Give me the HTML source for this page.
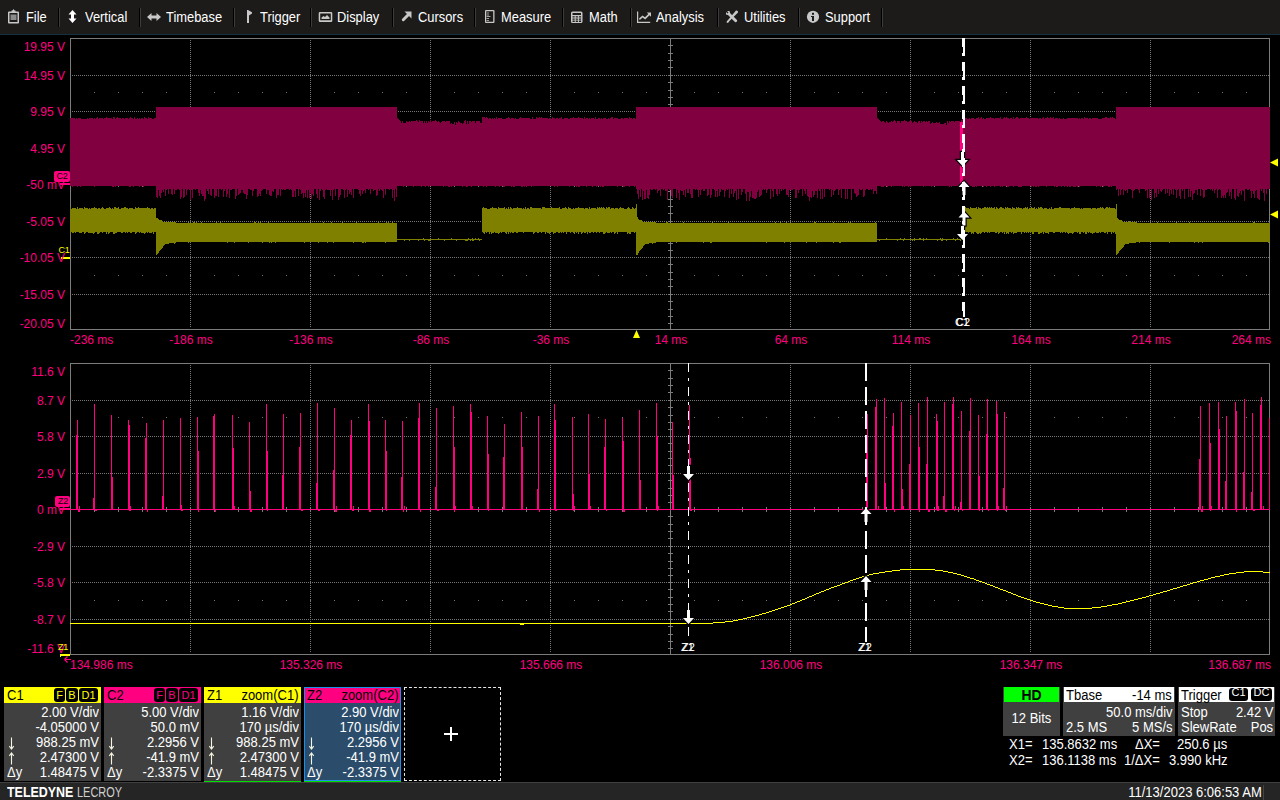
<!DOCTYPE html>
<html><head><meta charset="utf-8"><title>scope</title>
<style>
html,body{margin:0;padding:0;background:#000;}
body{width:1280px;height:800px;overflow:hidden;position:relative;font-family:"Liberation Sans",sans-serif;color:#fff;}
#menu{position:absolute;left:0;top:0;width:1280px;height:34px;background:#1c1b1a;}
#menuline{position:absolute;left:0;top:34px;width:1280px;height:1px;background:#17303f;}
.mi{position:absolute;top:8px;font-size:14px;line-height:18px;color:#fff;white-space:nowrap;transform:scaleX(0.92);transform-origin:0 50%;}
.sep{position:absolute;top:8px;width:1px;height:19px;background:#000;border-right:1px solid #3c3c3c;}
#menu svg{position:absolute;top:0;left:0;}
#scope{position:absolute;left:0;top:0;}
.yl{position:absolute;left:0;width:65px;text-align:right;font-size:12px;line-height:14px;color:#ff0080;white-space:nowrap;}
.xl{position:absolute;font-size:12px;line-height:14px;color:#ff0080;white-space:nowrap;}
.xc{width:120px;text-align:center;}
.mk{position:absolute;font-size:9px;line-height:11px;width:14px;text-align:center;letter-spacing:-0.3px;}
.cl{position:absolute;color:#fff;font-size:11px;line-height:12px;white-space:nowrap;}
/* descriptors */
.dbox{position:absolute;top:687px;width:97px;height:94px;background:#404040;font-size:14px;}
.dbox .hd{position:absolute;left:0;top:0;width:97px;height:16px;}
.dbox .nm{position:absolute;left:3px;top:0;line-height:16px;color:#000;transform:scaleX(.9286);transform-origin:0 50%;}
.dbox .zs{position:absolute;right:3px;top:0;line-height:16px;color:#000;transform:scaleX(.9286);transform-origin:100% 50%;}
.bdg{position:absolute;top:1px;height:14px;background:#000;border-radius:3px;font-size:11px;line-height:14px;text-align:center;}
.row{position:absolute;left:3px;right:2px;height:15px;line-height:15px;text-align:right;white-space:nowrap;transform:scaleX(.9286);transform-origin:100% 50%;}
.sym{position:absolute;left:3px;height:15px;line-height:15px;white-space:nowrap;transform:scaleX(.9286);transform-origin:0 50%;}
.symw{position:absolute;left:3px;height:15px;}
.ar{position:absolute;left:1px;top:2px;}
.ul{position:absolute;left:0;bottom:-1px;width:97px;height:1px;background:#00e000;}
#plus{position:absolute;left:404px;top:687px;width:95px;height:92px;border:1px dashed #e8e8e8;}
#plus:before{content:"";position:absolute;left:39px;top:45px;width:14px;height:2px;background:#fff;}
#plus:after{content:"";position:absolute;left:45px;top:39px;width:2px;height:14px;background:#fff;}
.rbox{position:absolute;top:687px;height:49px;background:#404040;font-size:14px;}
.ol{transform:scaleX(.9286);transform-origin:0 50%;}
.or{transform:scaleX(.9286);transform-origin:100% 50%;}
.oc{transform:scaleX(.9286);transform-origin:50% 50%;}
.rbox .hd{position:absolute;left:1px;right:1px;top:0;height:15px;background:#fff;color:#000;line-height:15px;}
.rbox span{position:absolute;line-height:15px;white-space:nowrap;}
.ct{position:absolute;font-size:14px;line-height:15px;white-space:pre;color:#fff;transform:scaleX(.9286);transform-origin:0 50%;}
#status{position:absolute;left:0;top:782px;width:1280px;height:18px;background:#252525;border-top:1px solid #404040;box-sizing:border-box;}
#logo{position:absolute;left:7px;top:0px;font-size:15px;line-height:17px;white-space:nowrap;transform-origin:0 0;}
#logo b{display:inline-block;transform:scaleX(0.83);transform-origin:0 0;color:#fff;}
#logo span{display:inline-block;transform:scaleX(0.73);transform-origin:0 0;color:#d0d0d0;position:absolute;left:70px;}
#date{position:absolute;right:18px;top:1px;font-size:14px;line-height:16px;color:#fff;transform:scaleX(.9286);transform-origin:100% 50%;}
#dsep{position:absolute;left:1263px;top:2px;width:1px;height:15px;background:#444;}
</style></head>
<body>
<div id="menu">
<div class="mi" style="left:26px">File</div>
<div class="sep" style="left:58px"></div>
<div class="mi" style="left:85px">Vertical</div>
<div class="sep" style="left:139px"></div>
<div class="mi" style="left:166px">Timebase</div>
<div class="sep" style="left:233px"></div>
<div class="mi" style="left:260px">Trigger</div>
<div class="sep" style="left:310px"></div>
<div class="mi" style="left:337px">Display</div>
<div class="sep" style="left:392px"></div>
<div class="mi" style="left:418px">Cursors</div>
<div class="sep" style="left:474px"></div>
<div class="mi" style="left:501px">Measure</div>
<div class="sep" style="left:562px"></div>
<div class="mi" style="left:589px">Math</div>
<div class="sep" style="left:630px"></div>
<div class="mi" style="left:656px">Analysis</div>
<div class="sep" style="left:717px"></div>
<div class="mi" style="left:744px">Utilities</div>
<div class="sep" style="left:798px"></div>
<div class="mi" style="left:825px">Support</div>
<div class="sep" style="left:881px"></div>
<svg width="900" height="34" viewBox="0 0 900 34">
<g fill="#c8c8c8" stroke="none">
<!-- File: clipboard -->
<path d="M9 11.5 h2.5 v-1 h1 l1 -1.5 l1 1.5 h1 v1 h2.5 a1 1 0 0 1 1 1 v10 a1 1 0 0 1 -1 1 h-9 a1 1 0 0 1 -1 -1 v-10 a1 1 0 0 1 1 -1 z M9.5 13 v9 h8 v-9 z" fill-rule="evenodd"/>
<rect x="10.5" y="14.5" width="6" height="5.5" fill="#8a8a8a"/>
<!-- Vertical: up-down arrow -->
<path d="M72.500 10 l4 4.500 h-2.500 v4 h2.500 l-4 4.500 l-4 -4.500 h2.500 v-4 h-2.500 z" fill="#fff"/>
<!-- Timebase: left-right arrow -->
<path d="M147 17 l4.500 -4 v2.500 h5 v-2.500 l4.500 4 l-4.500 4 v-2.500 h-5 v2.500 z"/>
<!-- Trigger: flag -->
<path d="M247 10 h1 l4 2.200 v1.300 l-3 2 v7.500 h-2 z"/>
<!-- Display: picture -->
<path d="M320 12 h11 a1.300 1.300 0 0 1 1.300 1.300 v7.400 a1.300 1.300 0 0 1 -1.300 1.300 h-11 a1.300 1.300 0 0 1 -1.300 -1.300 v-7.400 a1.300 1.300 0 0 1 1.300 -1.300 z M320.200 13.500 v6.800 h10.600 v-6.800 z" fill-rule="evenodd"/>
<path d="M321.500 19 v-1.500 l2 -1.500 l1.500 1 l2 -2 l2.500 2.500 v1.500 z"/>
<!-- Cursors: NE arrow -->
<path d="M404.500 11.500 H411.500 V18.500 Z"/><path d="M403.300 19.700 L408.500 14.500" stroke="#c8c8c8" stroke-width="3" stroke-linecap="round"/>
<!-- Measure: ruler -->
<path d="M486 10 h7.500 a1 1 0 0 1 1 1 v11 a1 1 0 0 1 -1 1 h-7.500 a1 1 0 0 1 -1 -1 v-11 a1 1 0 0 1 1 -1 z M486.200 11.200 v10.600 h7 v-10.600 z" fill-rule="evenodd"/>
<path d="M486.500 12.500 h2.500 v1 h-2.500 z M486.500 14.500 h2.500 v1 h-2.500 z M486.500 16 h4 v1 h-4 z M486.500 18 h2.500 v1 h-2.500 z M486.500 20 h2.500 v1 h-2.500 z" fill="#a0a0a0"/>
<!-- Math: calculator -->
<path d="M572.500 11.500 h8.500 a1.500 1.500 0 0 1 1.500 1.500 v8.500 a1.500 1.500 0 0 1 -1.500 1.500 h-8.500 a1.500 1.500 0 0 1 -1.500 -1.500 v-8.500 a1.500 1.500 0 0 1 1.500 -1.500 z M572.500 13 v2 h8.500 v-2 z M572.500 16.200 v1.300 h2.200 v-1.300 z M575.700 16.200 v1.300 h2.200 v-1.300 z M578.900 16.200 v1.300 h2.200 v-1.300 z M572.500 18.400 v1.300 h2.200 v-1.300 z M575.700 18.400 v1.300 h2.200 v-1.300 z M578.900 18.400 v1.300 h2.200 v-1.300 z M572.500 20.600 v1.300 h2.200 v-1.300 z M575.700 20.600 v1.300 h2.200 v-1.300 z M578.900 20.600 v1.300 h2.200 v-1.300 z" fill-rule="evenodd"/>
<!-- Analysis: chart -->
<path d="M637 11.500 h1.200 v10.300 h12 v1.200 h-13.200 z"/>
<path d="M639 18.500 l3.500 -3 l2.500 1.800 l3.300 -3.300 l-1.500 -1.500 h4.200 v4.200 l-1.500 -1.500 l-4.300 4.300 l-2.600 -1.900 l-2.800 2.400 z"/>
<!-- Utilities: tools -->
<path d="M727 11 l2.500 0 l0.500 2 l7 7 a1.500 1.500 0 0 1 -2 2 l-7 -7 l-2 -0.500 l0 -2.500 l1.500 1.500 l1 -1 z"/>
<path d="M736 10.500 a1.600 1.600 0 0 1 2 2 l-8.500 8.500 l-1.500 2 l-1.500 -0.500 l0.500 -1.500 l1 -1 z"/>
<!-- Support: info -->
<circle cx="813" cy="16.800" r="6.100"/>
<rect x="812" y="12.800" width="2" height="2" fill="#1b1b1b"/>
<rect x="812" y="16" width="2" height="5" fill="#1b1b1b"/>
<rect x="811" y="16" width="2" height="1" fill="#1b1b1b"/>
</g>
</svg>

</div>
<div id="menuline"></div>
<svg id="scope" width="1280" height="800" viewBox="0 0 1280 800">
<g shape-rendering="crispEdges">
<line x1="72" x2="1269" y1="75.5" y2="75.5" stroke="#767676" stroke-width="1" stroke-dasharray="1 1"/>
<line x1="72" x2="1269" y1="111.5" y2="111.5" stroke="#767676" stroke-width="1" stroke-dasharray="1 1"/>
<line x1="72" x2="1269" y1="148.5" y2="148.5" stroke="#767676" stroke-width="1" stroke-dasharray="1 1"/>
<line x1="72" x2="1269" y1="221.5" y2="221.5" stroke="#767676" stroke-width="1" stroke-dasharray="1 1"/>
<line x1="72" x2="1269" y1="257.5" y2="257.5" stroke="#767676" stroke-width="1" stroke-dasharray="1 1"/>
<line x1="72" x2="1269" y1="294.5" y2="294.5" stroke="#767676" stroke-width="1" stroke-dasharray="1 1"/>
<line x1="190.5" x2="190.5" y1="40" y2="328" stroke="#767676" stroke-width="1" stroke-dasharray="1 1"/>
<line x1="310.5" x2="310.5" y1="40" y2="328" stroke="#767676" stroke-width="1" stroke-dasharray="1 1"/>
<line x1="430.5" x2="430.5" y1="40" y2="328" stroke="#767676" stroke-width="1" stroke-dasharray="1 1"/>
<line x1="550.5" x2="550.5" y1="40" y2="328" stroke="#767676" stroke-width="1" stroke-dasharray="1 1"/>
<line x1="790.5" x2="790.5" y1="40" y2="328" stroke="#767676" stroke-width="1" stroke-dasharray="1 1"/>
<line x1="910.5" x2="910.5" y1="40" y2="328" stroke="#767676" stroke-width="1" stroke-dasharray="1 1"/>
<line x1="1030.5" x2="1030.5" y1="40" y2="328" stroke="#767676" stroke-width="1" stroke-dasharray="1 1"/>
<line x1="1150.5" x2="1150.5" y1="40" y2="328" stroke="#767676" stroke-width="1" stroke-dasharray="1 1"/>
<rect x="94" y="92" width="1" height="1" fill="#767676"/>
<rect x="118" y="92" width="1" height="1" fill="#767676"/>
<rect x="142" y="92" width="1" height="1" fill="#767676"/>
<rect x="166" y="92" width="1" height="1" fill="#767676"/>
<rect x="190" y="92" width="1" height="1" fill="#767676"/>
<rect x="214" y="92" width="1" height="1" fill="#767676"/>
<rect x="238" y="92" width="1" height="1" fill="#767676"/>
<rect x="262" y="92" width="1" height="1" fill="#767676"/>
<rect x="286" y="92" width="1" height="1" fill="#767676"/>
<rect x="310" y="92" width="1" height="1" fill="#767676"/>
<rect x="334" y="92" width="1" height="1" fill="#767676"/>
<rect x="358" y="92" width="1" height="1" fill="#767676"/>
<rect x="382" y="92" width="1" height="1" fill="#767676"/>
<rect x="406" y="92" width="1" height="1" fill="#767676"/>
<rect x="430" y="92" width="1" height="1" fill="#767676"/>
<rect x="454" y="92" width="1" height="1" fill="#767676"/>
<rect x="478" y="92" width="1" height="1" fill="#767676"/>
<rect x="502" y="92" width="1" height="1" fill="#767676"/>
<rect x="526" y="92" width="1" height="1" fill="#767676"/>
<rect x="550" y="92" width="1" height="1" fill="#767676"/>
<rect x="574" y="92" width="1" height="1" fill="#767676"/>
<rect x="598" y="92" width="1" height="1" fill="#767676"/>
<rect x="622" y="92" width="1" height="1" fill="#767676"/>
<rect x="646" y="92" width="1" height="1" fill="#767676"/>
<rect x="694" y="92" width="1" height="1" fill="#767676"/>
<rect x="718" y="92" width="1" height="1" fill="#767676"/>
<rect x="742" y="92" width="1" height="1" fill="#767676"/>
<rect x="766" y="92" width="1" height="1" fill="#767676"/>
<rect x="790" y="92" width="1" height="1" fill="#767676"/>
<rect x="814" y="92" width="1" height="1" fill="#767676"/>
<rect x="838" y="92" width="1" height="1" fill="#767676"/>
<rect x="862" y="92" width="1" height="1" fill="#767676"/>
<rect x="886" y="92" width="1" height="1" fill="#767676"/>
<rect x="910" y="92" width="1" height="1" fill="#767676"/>
<rect x="934" y="92" width="1" height="1" fill="#767676"/>
<rect x="958" y="92" width="1" height="1" fill="#767676"/>
<rect x="982" y="92" width="1" height="1" fill="#767676"/>
<rect x="1006" y="92" width="1" height="1" fill="#767676"/>
<rect x="1030" y="92" width="1" height="1" fill="#767676"/>
<rect x="1054" y="92" width="1" height="1" fill="#767676"/>
<rect x="1078" y="92" width="1" height="1" fill="#767676"/>
<rect x="1102" y="92" width="1" height="1" fill="#767676"/>
<rect x="1126" y="92" width="1" height="1" fill="#767676"/>
<rect x="1150" y="92" width="1" height="1" fill="#767676"/>
<rect x="1174" y="92" width="1" height="1" fill="#767676"/>
<rect x="1198" y="92" width="1" height="1" fill="#767676"/>
<rect x="1222" y="92" width="1" height="1" fill="#767676"/>
<rect x="1246" y="92" width="1" height="1" fill="#767676"/>
<rect x="94" y="275" width="1" height="1" fill="#767676"/>
<rect x="118" y="275" width="1" height="1" fill="#767676"/>
<rect x="142" y="275" width="1" height="1" fill="#767676"/>
<rect x="166" y="275" width="1" height="1" fill="#767676"/>
<rect x="190" y="275" width="1" height="1" fill="#767676"/>
<rect x="214" y="275" width="1" height="1" fill="#767676"/>
<rect x="238" y="275" width="1" height="1" fill="#767676"/>
<rect x="262" y="275" width="1" height="1" fill="#767676"/>
<rect x="286" y="275" width="1" height="1" fill="#767676"/>
<rect x="310" y="275" width="1" height="1" fill="#767676"/>
<rect x="334" y="275" width="1" height="1" fill="#767676"/>
<rect x="358" y="275" width="1" height="1" fill="#767676"/>
<rect x="382" y="275" width="1" height="1" fill="#767676"/>
<rect x="406" y="275" width="1" height="1" fill="#767676"/>
<rect x="430" y="275" width="1" height="1" fill="#767676"/>
<rect x="454" y="275" width="1" height="1" fill="#767676"/>
<rect x="478" y="275" width="1" height="1" fill="#767676"/>
<rect x="502" y="275" width="1" height="1" fill="#767676"/>
<rect x="526" y="275" width="1" height="1" fill="#767676"/>
<rect x="550" y="275" width="1" height="1" fill="#767676"/>
<rect x="574" y="275" width="1" height="1" fill="#767676"/>
<rect x="598" y="275" width="1" height="1" fill="#767676"/>
<rect x="622" y="275" width="1" height="1" fill="#767676"/>
<rect x="646" y="275" width="1" height="1" fill="#767676"/>
<rect x="694" y="275" width="1" height="1" fill="#767676"/>
<rect x="718" y="275" width="1" height="1" fill="#767676"/>
<rect x="742" y="275" width="1" height="1" fill="#767676"/>
<rect x="766" y="275" width="1" height="1" fill="#767676"/>
<rect x="790" y="275" width="1" height="1" fill="#767676"/>
<rect x="814" y="275" width="1" height="1" fill="#767676"/>
<rect x="838" y="275" width="1" height="1" fill="#767676"/>
<rect x="862" y="275" width="1" height="1" fill="#767676"/>
<rect x="886" y="275" width="1" height="1" fill="#767676"/>
<rect x="910" y="275" width="1" height="1" fill="#767676"/>
<rect x="934" y="275" width="1" height="1" fill="#767676"/>
<rect x="958" y="275" width="1" height="1" fill="#767676"/>
<rect x="982" y="275" width="1" height="1" fill="#767676"/>
<rect x="1006" y="275" width="1" height="1" fill="#767676"/>
<rect x="1030" y="275" width="1" height="1" fill="#767676"/>
<rect x="1054" y="275" width="1" height="1" fill="#767676"/>
<rect x="1078" y="275" width="1" height="1" fill="#767676"/>
<rect x="1102" y="275" width="1" height="1" fill="#767676"/>
<rect x="1126" y="275" width="1" height="1" fill="#767676"/>
<rect x="1150" y="275" width="1" height="1" fill="#767676"/>
<rect x="1174" y="275" width="1" height="1" fill="#767676"/>
<rect x="1198" y="275" width="1" height="1" fill="#767676"/>
<rect x="1222" y="275" width="1" height="1" fill="#767676"/>
<rect x="1246" y="275" width="1" height="1" fill="#767676"/>
<rect x="670" y="38" width="1" height="291" fill="#7c7c7c"/>
<rect x="70" y="184" width="1200" height="1" fill="#7c7c7c"/>
<rect x="668" y="45" width="5" height="1" fill="#7c7c7c"/>
<rect x="668" y="53" width="5" height="1" fill="#7c7c7c"/>
<rect x="668" y="60" width="5" height="1" fill="#7c7c7c"/>
<rect x="668" y="67" width="5" height="1" fill="#7c7c7c"/>
<rect x="668" y="75" width="5" height="1" fill="#7c7c7c"/>
<rect x="668" y="82" width="5" height="1" fill="#7c7c7c"/>
<rect x="668" y="90" width="5" height="1" fill="#7c7c7c"/>
<rect x="668" y="97" width="5" height="1" fill="#7c7c7c"/>
<rect x="668" y="104" width="5" height="1" fill="#7c7c7c"/>
<rect x="668" y="111" width="5" height="1" fill="#7c7c7c"/>
<rect x="668" y="118" width="5" height="1" fill="#7c7c7c"/>
<rect x="668" y="126" width="5" height="1" fill="#7c7c7c"/>
<rect x="668" y="133" width="5" height="1" fill="#7c7c7c"/>
<rect x="668" y="140" width="5" height="1" fill="#7c7c7c"/>
<rect x="668" y="148" width="5" height="1" fill="#7c7c7c"/>
<rect x="668" y="155" width="5" height="1" fill="#7c7c7c"/>
<rect x="668" y="163" width="5" height="1" fill="#7c7c7c"/>
<rect x="668" y="170" width="5" height="1" fill="#7c7c7c"/>
<rect x="668" y="177" width="5" height="1" fill="#7c7c7c"/>
<rect x="668" y="184" width="5" height="1" fill="#7c7c7c"/>
<rect x="668" y="191" width="5" height="1" fill="#7c7c7c"/>
<rect x="668" y="199" width="5" height="1" fill="#7c7c7c"/>
<rect x="668" y="206" width="5" height="1" fill="#7c7c7c"/>
<rect x="668" y="213" width="5" height="1" fill="#7c7c7c"/>
<rect x="668" y="221" width="5" height="1" fill="#7c7c7c"/>
<rect x="668" y="228" width="5" height="1" fill="#7c7c7c"/>
<rect x="668" y="236" width="5" height="1" fill="#7c7c7c"/>
<rect x="668" y="243" width="5" height="1" fill="#7c7c7c"/>
<rect x="668" y="250" width="5" height="1" fill="#7c7c7c"/>
<rect x="668" y="257" width="5" height="1" fill="#7c7c7c"/>
<rect x="668" y="264" width="5" height="1" fill="#7c7c7c"/>
<rect x="668" y="272" width="5" height="1" fill="#7c7c7c"/>
<rect x="668" y="279" width="5" height="1" fill="#7c7c7c"/>
<rect x="668" y="286" width="5" height="1" fill="#7c7c7c"/>
<rect x="668" y="294" width="5" height="1" fill="#7c7c7c"/>
<rect x="668" y="301" width="5" height="1" fill="#7c7c7c"/>
<rect x="668" y="309" width="5" height="1" fill="#7c7c7c"/>
<rect x="668" y="316" width="5" height="1" fill="#7c7c7c"/>
<rect x="668" y="323" width="5" height="1" fill="#7c7c7c"/>
<rect x="94" y="182" width="1" height="5" fill="#7c7c7c"/>
<rect x="118" y="182" width="1" height="5" fill="#7c7c7c"/>
<rect x="142" y="182" width="1" height="5" fill="#7c7c7c"/>
<rect x="166" y="182" width="1" height="5" fill="#7c7c7c"/>
<rect x="190" y="182" width="1" height="5" fill="#7c7c7c"/>
<rect x="214" y="182" width="1" height="5" fill="#7c7c7c"/>
<rect x="238" y="182" width="1" height="5" fill="#7c7c7c"/>
<rect x="262" y="182" width="1" height="5" fill="#7c7c7c"/>
<rect x="286" y="182" width="1" height="5" fill="#7c7c7c"/>
<rect x="310" y="182" width="1" height="5" fill="#7c7c7c"/>
<rect x="334" y="182" width="1" height="5" fill="#7c7c7c"/>
<rect x="358" y="182" width="1" height="5" fill="#7c7c7c"/>
<rect x="382" y="182" width="1" height="5" fill="#7c7c7c"/>
<rect x="406" y="182" width="1" height="5" fill="#7c7c7c"/>
<rect x="430" y="182" width="1" height="5" fill="#7c7c7c"/>
<rect x="454" y="182" width="1" height="5" fill="#7c7c7c"/>
<rect x="478" y="182" width="1" height="5" fill="#7c7c7c"/>
<rect x="502" y="182" width="1" height="5" fill="#7c7c7c"/>
<rect x="526" y="182" width="1" height="5" fill="#7c7c7c"/>
<rect x="550" y="182" width="1" height="5" fill="#7c7c7c"/>
<rect x="574" y="182" width="1" height="5" fill="#7c7c7c"/>
<rect x="598" y="182" width="1" height="5" fill="#7c7c7c"/>
<rect x="622" y="182" width="1" height="5" fill="#7c7c7c"/>
<rect x="646" y="182" width="1" height="5" fill="#7c7c7c"/>
<rect x="670" y="182" width="1" height="5" fill="#7c7c7c"/>
<rect x="694" y="182" width="1" height="5" fill="#7c7c7c"/>
<rect x="718" y="182" width="1" height="5" fill="#7c7c7c"/>
<rect x="742" y="182" width="1" height="5" fill="#7c7c7c"/>
<rect x="766" y="182" width="1" height="5" fill="#7c7c7c"/>
<rect x="790" y="182" width="1" height="5" fill="#7c7c7c"/>
<rect x="814" y="182" width="1" height="5" fill="#7c7c7c"/>
<rect x="838" y="182" width="1" height="5" fill="#7c7c7c"/>
<rect x="862" y="182" width="1" height="5" fill="#7c7c7c"/>
<rect x="886" y="182" width="1" height="5" fill="#7c7c7c"/>
<rect x="910" y="182" width="1" height="5" fill="#7c7c7c"/>
<rect x="934" y="182" width="1" height="5" fill="#7c7c7c"/>
<rect x="958" y="182" width="1" height="5" fill="#7c7c7c"/>
<rect x="982" y="182" width="1" height="5" fill="#7c7c7c"/>
<rect x="1006" y="182" width="1" height="5" fill="#7c7c7c"/>
<rect x="1030" y="182" width="1" height="5" fill="#7c7c7c"/>
<rect x="1054" y="182" width="1" height="5" fill="#7c7c7c"/>
<rect x="1078" y="182" width="1" height="5" fill="#7c7c7c"/>
<rect x="1102" y="182" width="1" height="5" fill="#7c7c7c"/>
<rect x="1126" y="182" width="1" height="5" fill="#7c7c7c"/>
<rect x="1150" y="182" width="1" height="5" fill="#7c7c7c"/>
<rect x="1174" y="182" width="1" height="5" fill="#7c7c7c"/>
<rect x="1198" y="182" width="1" height="5" fill="#7c7c7c"/>
<rect x="1222" y="182" width="1" height="5" fill="#7c7c7c"/>
<rect x="1246" y="182" width="1" height="5" fill="#7c7c7c"/>
<rect x="70.5" y="38.5" width="1199" height="291" fill="none" stroke="#7c7c7c" stroke-width="1"/>
</g>
<g shape-rendering="crispEdges">
<line x1="72" x2="1269" y1="400.5" y2="400.5" stroke="#767676" stroke-width="1" stroke-dasharray="1 1"/>
<line x1="72" x2="1269" y1="436.5" y2="436.5" stroke="#767676" stroke-width="1" stroke-dasharray="1 1"/>
<line x1="72" x2="1269" y1="473.5" y2="473.5" stroke="#767676" stroke-width="1" stroke-dasharray="1 1"/>
<line x1="72" x2="1269" y1="546.5" y2="546.5" stroke="#767676" stroke-width="1" stroke-dasharray="1 1"/>
<line x1="72" x2="1269" y1="582.5" y2="582.5" stroke="#767676" stroke-width="1" stroke-dasharray="1 1"/>
<line x1="72" x2="1269" y1="619.5" y2="619.5" stroke="#767676" stroke-width="1" stroke-dasharray="1 1"/>
<line x1="190.5" x2="190.5" y1="365" y2="653" stroke="#767676" stroke-width="1" stroke-dasharray="1 1"/>
<line x1="310.5" x2="310.5" y1="365" y2="653" stroke="#767676" stroke-width="1" stroke-dasharray="1 1"/>
<line x1="430.5" x2="430.5" y1="365" y2="653" stroke="#767676" stroke-width="1" stroke-dasharray="1 1"/>
<line x1="550.5" x2="550.5" y1="365" y2="653" stroke="#767676" stroke-width="1" stroke-dasharray="1 1"/>
<line x1="790.5" x2="790.5" y1="365" y2="653" stroke="#767676" stroke-width="1" stroke-dasharray="1 1"/>
<line x1="910.5" x2="910.5" y1="365" y2="653" stroke="#767676" stroke-width="1" stroke-dasharray="1 1"/>
<line x1="1030.5" x2="1030.5" y1="365" y2="653" stroke="#767676" stroke-width="1" stroke-dasharray="1 1"/>
<line x1="1150.5" x2="1150.5" y1="365" y2="653" stroke="#767676" stroke-width="1" stroke-dasharray="1 1"/>
<rect x="94" y="417" width="1" height="1" fill="#767676"/>
<rect x="118" y="417" width="1" height="1" fill="#767676"/>
<rect x="142" y="417" width="1" height="1" fill="#767676"/>
<rect x="166" y="417" width="1" height="1" fill="#767676"/>
<rect x="190" y="417" width="1" height="1" fill="#767676"/>
<rect x="214" y="417" width="1" height="1" fill="#767676"/>
<rect x="238" y="417" width="1" height="1" fill="#767676"/>
<rect x="262" y="417" width="1" height="1" fill="#767676"/>
<rect x="286" y="417" width="1" height="1" fill="#767676"/>
<rect x="310" y="417" width="1" height="1" fill="#767676"/>
<rect x="334" y="417" width="1" height="1" fill="#767676"/>
<rect x="358" y="417" width="1" height="1" fill="#767676"/>
<rect x="382" y="417" width="1" height="1" fill="#767676"/>
<rect x="406" y="417" width="1" height="1" fill="#767676"/>
<rect x="430" y="417" width="1" height="1" fill="#767676"/>
<rect x="454" y="417" width="1" height="1" fill="#767676"/>
<rect x="478" y="417" width="1" height="1" fill="#767676"/>
<rect x="502" y="417" width="1" height="1" fill="#767676"/>
<rect x="526" y="417" width="1" height="1" fill="#767676"/>
<rect x="550" y="417" width="1" height="1" fill="#767676"/>
<rect x="574" y="417" width="1" height="1" fill="#767676"/>
<rect x="598" y="417" width="1" height="1" fill="#767676"/>
<rect x="622" y="417" width="1" height="1" fill="#767676"/>
<rect x="646" y="417" width="1" height="1" fill="#767676"/>
<rect x="694" y="417" width="1" height="1" fill="#767676"/>
<rect x="718" y="417" width="1" height="1" fill="#767676"/>
<rect x="742" y="417" width="1" height="1" fill="#767676"/>
<rect x="766" y="417" width="1" height="1" fill="#767676"/>
<rect x="790" y="417" width="1" height="1" fill="#767676"/>
<rect x="814" y="417" width="1" height="1" fill="#767676"/>
<rect x="838" y="417" width="1" height="1" fill="#767676"/>
<rect x="862" y="417" width="1" height="1" fill="#767676"/>
<rect x="886" y="417" width="1" height="1" fill="#767676"/>
<rect x="910" y="417" width="1" height="1" fill="#767676"/>
<rect x="934" y="417" width="1" height="1" fill="#767676"/>
<rect x="958" y="417" width="1" height="1" fill="#767676"/>
<rect x="982" y="417" width="1" height="1" fill="#767676"/>
<rect x="1006" y="417" width="1" height="1" fill="#767676"/>
<rect x="1030" y="417" width="1" height="1" fill="#767676"/>
<rect x="1054" y="417" width="1" height="1" fill="#767676"/>
<rect x="1078" y="417" width="1" height="1" fill="#767676"/>
<rect x="1102" y="417" width="1" height="1" fill="#767676"/>
<rect x="1126" y="417" width="1" height="1" fill="#767676"/>
<rect x="1150" y="417" width="1" height="1" fill="#767676"/>
<rect x="1174" y="417" width="1" height="1" fill="#767676"/>
<rect x="1198" y="417" width="1" height="1" fill="#767676"/>
<rect x="1222" y="417" width="1" height="1" fill="#767676"/>
<rect x="1246" y="417" width="1" height="1" fill="#767676"/>
<rect x="94" y="600" width="1" height="1" fill="#767676"/>
<rect x="118" y="600" width="1" height="1" fill="#767676"/>
<rect x="142" y="600" width="1" height="1" fill="#767676"/>
<rect x="166" y="600" width="1" height="1" fill="#767676"/>
<rect x="190" y="600" width="1" height="1" fill="#767676"/>
<rect x="214" y="600" width="1" height="1" fill="#767676"/>
<rect x="238" y="600" width="1" height="1" fill="#767676"/>
<rect x="262" y="600" width="1" height="1" fill="#767676"/>
<rect x="286" y="600" width="1" height="1" fill="#767676"/>
<rect x="310" y="600" width="1" height="1" fill="#767676"/>
<rect x="334" y="600" width="1" height="1" fill="#767676"/>
<rect x="358" y="600" width="1" height="1" fill="#767676"/>
<rect x="382" y="600" width="1" height="1" fill="#767676"/>
<rect x="406" y="600" width="1" height="1" fill="#767676"/>
<rect x="430" y="600" width="1" height="1" fill="#767676"/>
<rect x="454" y="600" width="1" height="1" fill="#767676"/>
<rect x="478" y="600" width="1" height="1" fill="#767676"/>
<rect x="502" y="600" width="1" height="1" fill="#767676"/>
<rect x="526" y="600" width="1" height="1" fill="#767676"/>
<rect x="550" y="600" width="1" height="1" fill="#767676"/>
<rect x="574" y="600" width="1" height="1" fill="#767676"/>
<rect x="598" y="600" width="1" height="1" fill="#767676"/>
<rect x="622" y="600" width="1" height="1" fill="#767676"/>
<rect x="646" y="600" width="1" height="1" fill="#767676"/>
<rect x="694" y="600" width="1" height="1" fill="#767676"/>
<rect x="718" y="600" width="1" height="1" fill="#767676"/>
<rect x="742" y="600" width="1" height="1" fill="#767676"/>
<rect x="766" y="600" width="1" height="1" fill="#767676"/>
<rect x="790" y="600" width="1" height="1" fill="#767676"/>
<rect x="814" y="600" width="1" height="1" fill="#767676"/>
<rect x="838" y="600" width="1" height="1" fill="#767676"/>
<rect x="862" y="600" width="1" height="1" fill="#767676"/>
<rect x="886" y="600" width="1" height="1" fill="#767676"/>
<rect x="910" y="600" width="1" height="1" fill="#767676"/>
<rect x="934" y="600" width="1" height="1" fill="#767676"/>
<rect x="958" y="600" width="1" height="1" fill="#767676"/>
<rect x="982" y="600" width="1" height="1" fill="#767676"/>
<rect x="1006" y="600" width="1" height="1" fill="#767676"/>
<rect x="1030" y="600" width="1" height="1" fill="#767676"/>
<rect x="1054" y="600" width="1" height="1" fill="#767676"/>
<rect x="1078" y="600" width="1" height="1" fill="#767676"/>
<rect x="1102" y="600" width="1" height="1" fill="#767676"/>
<rect x="1126" y="600" width="1" height="1" fill="#767676"/>
<rect x="1150" y="600" width="1" height="1" fill="#767676"/>
<rect x="1174" y="600" width="1" height="1" fill="#767676"/>
<rect x="1198" y="600" width="1" height="1" fill="#767676"/>
<rect x="1222" y="600" width="1" height="1" fill="#767676"/>
<rect x="1246" y="600" width="1" height="1" fill="#767676"/>
<rect x="670" y="363" width="1" height="291" fill="#7c7c7c"/>
<rect x="70" y="509" width="1200" height="1" fill="#7c7c7c"/>
<rect x="668" y="370" width="5" height="1" fill="#7c7c7c"/>
<rect x="668" y="378" width="5" height="1" fill="#7c7c7c"/>
<rect x="668" y="385" width="5" height="1" fill="#7c7c7c"/>
<rect x="668" y="392" width="5" height="1" fill="#7c7c7c"/>
<rect x="668" y="400" width="5" height="1" fill="#7c7c7c"/>
<rect x="668" y="407" width="5" height="1" fill="#7c7c7c"/>
<rect x="668" y="415" width="5" height="1" fill="#7c7c7c"/>
<rect x="668" y="422" width="5" height="1" fill="#7c7c7c"/>
<rect x="668" y="429" width="5" height="1" fill="#7c7c7c"/>
<rect x="668" y="436" width="5" height="1" fill="#7c7c7c"/>
<rect x="668" y="443" width="5" height="1" fill="#7c7c7c"/>
<rect x="668" y="451" width="5" height="1" fill="#7c7c7c"/>
<rect x="668" y="458" width="5" height="1" fill="#7c7c7c"/>
<rect x="668" y="465" width="5" height="1" fill="#7c7c7c"/>
<rect x="668" y="473" width="5" height="1" fill="#7c7c7c"/>
<rect x="668" y="480" width="5" height="1" fill="#7c7c7c"/>
<rect x="668" y="488" width="5" height="1" fill="#7c7c7c"/>
<rect x="668" y="495" width="5" height="1" fill="#7c7c7c"/>
<rect x="668" y="502" width="5" height="1" fill="#7c7c7c"/>
<rect x="668" y="509" width="5" height="1" fill="#7c7c7c"/>
<rect x="668" y="516" width="5" height="1" fill="#7c7c7c"/>
<rect x="668" y="524" width="5" height="1" fill="#7c7c7c"/>
<rect x="668" y="531" width="5" height="1" fill="#7c7c7c"/>
<rect x="668" y="538" width="5" height="1" fill="#7c7c7c"/>
<rect x="668" y="546" width="5" height="1" fill="#7c7c7c"/>
<rect x="668" y="553" width="5" height="1" fill="#7c7c7c"/>
<rect x="668" y="561" width="5" height="1" fill="#7c7c7c"/>
<rect x="668" y="568" width="5" height="1" fill="#7c7c7c"/>
<rect x="668" y="575" width="5" height="1" fill="#7c7c7c"/>
<rect x="668" y="582" width="5" height="1" fill="#7c7c7c"/>
<rect x="668" y="589" width="5" height="1" fill="#7c7c7c"/>
<rect x="668" y="597" width="5" height="1" fill="#7c7c7c"/>
<rect x="668" y="604" width="5" height="1" fill="#7c7c7c"/>
<rect x="668" y="611" width="5" height="1" fill="#7c7c7c"/>
<rect x="668" y="619" width="5" height="1" fill="#7c7c7c"/>
<rect x="668" y="626" width="5" height="1" fill="#7c7c7c"/>
<rect x="668" y="634" width="5" height="1" fill="#7c7c7c"/>
<rect x="668" y="641" width="5" height="1" fill="#7c7c7c"/>
<rect x="668" y="648" width="5" height="1" fill="#7c7c7c"/>
<rect x="94" y="507" width="1" height="5" fill="#7c7c7c"/>
<rect x="118" y="507" width="1" height="5" fill="#7c7c7c"/>
<rect x="142" y="507" width="1" height="5" fill="#7c7c7c"/>
<rect x="166" y="507" width="1" height="5" fill="#7c7c7c"/>
<rect x="190" y="507" width="1" height="5" fill="#7c7c7c"/>
<rect x="214" y="507" width="1" height="5" fill="#7c7c7c"/>
<rect x="238" y="507" width="1" height="5" fill="#7c7c7c"/>
<rect x="262" y="507" width="1" height="5" fill="#7c7c7c"/>
<rect x="286" y="507" width="1" height="5" fill="#7c7c7c"/>
<rect x="310" y="507" width="1" height="5" fill="#7c7c7c"/>
<rect x="334" y="507" width="1" height="5" fill="#7c7c7c"/>
<rect x="358" y="507" width="1" height="5" fill="#7c7c7c"/>
<rect x="382" y="507" width="1" height="5" fill="#7c7c7c"/>
<rect x="406" y="507" width="1" height="5" fill="#7c7c7c"/>
<rect x="430" y="507" width="1" height="5" fill="#7c7c7c"/>
<rect x="454" y="507" width="1" height="5" fill="#7c7c7c"/>
<rect x="478" y="507" width="1" height="5" fill="#7c7c7c"/>
<rect x="502" y="507" width="1" height="5" fill="#7c7c7c"/>
<rect x="526" y="507" width="1" height="5" fill="#7c7c7c"/>
<rect x="550" y="507" width="1" height="5" fill="#7c7c7c"/>
<rect x="574" y="507" width="1" height="5" fill="#7c7c7c"/>
<rect x="598" y="507" width="1" height="5" fill="#7c7c7c"/>
<rect x="622" y="507" width="1" height="5" fill="#7c7c7c"/>
<rect x="646" y="507" width="1" height="5" fill="#7c7c7c"/>
<rect x="670" y="507" width="1" height="5" fill="#7c7c7c"/>
<rect x="694" y="507" width="1" height="5" fill="#7c7c7c"/>
<rect x="718" y="507" width="1" height="5" fill="#7c7c7c"/>
<rect x="742" y="507" width="1" height="5" fill="#7c7c7c"/>
<rect x="766" y="507" width="1" height="5" fill="#7c7c7c"/>
<rect x="790" y="507" width="1" height="5" fill="#7c7c7c"/>
<rect x="814" y="507" width="1" height="5" fill="#7c7c7c"/>
<rect x="838" y="507" width="1" height="5" fill="#7c7c7c"/>
<rect x="862" y="507" width="1" height="5" fill="#7c7c7c"/>
<rect x="886" y="507" width="1" height="5" fill="#7c7c7c"/>
<rect x="910" y="507" width="1" height="5" fill="#7c7c7c"/>
<rect x="934" y="507" width="1" height="5" fill="#7c7c7c"/>
<rect x="958" y="507" width="1" height="5" fill="#7c7c7c"/>
<rect x="982" y="507" width="1" height="5" fill="#7c7c7c"/>
<rect x="1006" y="507" width="1" height="5" fill="#7c7c7c"/>
<rect x="1030" y="507" width="1" height="5" fill="#7c7c7c"/>
<rect x="1054" y="507" width="1" height="5" fill="#7c7c7c"/>
<rect x="1078" y="507" width="1" height="5" fill="#7c7c7c"/>
<rect x="1102" y="507" width="1" height="5" fill="#7c7c7c"/>
<rect x="1126" y="507" width="1" height="5" fill="#7c7c7c"/>
<rect x="1150" y="507" width="1" height="5" fill="#7c7c7c"/>
<rect x="1174" y="507" width="1" height="5" fill="#7c7c7c"/>
<rect x="1198" y="507" width="1" height="5" fill="#7c7c7c"/>
<rect x="1222" y="507" width="1" height="5" fill="#7c7c7c"/>
<rect x="1246" y="507" width="1" height="5" fill="#7c7c7c"/>
<rect x="70.5" y="363.5" width="1199" height="291" fill="none" stroke="#7c7c7c" stroke-width="1"/>
</g>
<g shape-rendering="crispEdges"><path d="M70 118H71V118H72V118H73V118H74V118H75V119H76V118H77V119H78V118H79V118H80V118H81V119H82V119H83V119H84V119H85V119H86V119H87V118H88V119H89V118H90V118H91V118H92V118H93V119H94V118H95V119H96V118H97V117H98V119H99V118H100V118H101V118H102V118H103V119H104V118H105V118H106V117H107V118H108V118H109V118H110V118H111V118H112V119H113V117H114V117H115V119H116V118H117V117H118V118H119V118H120V118H121V119H122V118H123V118H124V119H125V118H126V118H127V118H128V119H129V118H130V117H131V118H132V118H133V119H134V117H135V119H136V119H137V118H138V119H139V118H140V119H141V118H142V118H143V119H144V117H145V118H146V118H147V119H148V117H149V118H150V118H151V118H152V119H153V119H154V118H155V118H156V107H157V107H158V107H159V107H160V107H161V107H162V107H163V107H164V107H165V107H166V107H167V107H168V107H169V107H170V107H171V107H172V107H173V107H174V107H175V107H176V107H177V107H178V107H179V107H180V107H181V107H182V107H183V107H184V107H185V107H186V107H187V107H188V107H189V107H190V107H191V107H192V107H193V107H194V107H195V107H196V107H197V107H198V107H199V107H200V107H201V107H202V107H203V107H204V107H205V107H206V107H207V107H208V107H209V107H210V107H211V107H212V107H213V107H214V107H215V107H216V107H217V107H218V107H219V107H220V107H221V107H222V107H223V107H224V107H225V107H226V107H227V107H228V107H229V107H230V107H231V107H232V107H233V107H234V107H235V107H236V107H237V107H238V107H239V107H240V107H241V107H242V107H243V107H244V107H245V107H246V107H247V107H248V107H249V107H250V107H251V107H252V107H253V107H254V107H255V107H256V107H257V107H258V107H259V107H260V107H261V107H262V107H263V107H264V107H265V107H266V107H267V107H268V107H269V107H270V107H271V107H272V107H273V107H274V107H275V107H276V107H277V107H278V107H279V107H280V107H281V107H282V107H283V107H284V107H285V107H286V107H287V107H288V107H289V107H290V107H291V107H292V107H293V107H294V107H295V107H296V107H297V107H298V107H299V107H300V107H301V107H302V107H303V107H304V107H305V107H306V107H307V107H308V107H309V107H310V107H311V107H312V107H313V107H314V107H315V107H316V107H317V107H318V107H319V107H320V107H321V107H322V107H323V107H324V107H325V107H326V107H327V107H328V107H329V107H330V107H331V107H332V107H333V107H334V107H335V107H336V107H337V107H338V107H339V107H340V107H341V107H342V107H343V107H344V107H345V107H346V107H347V107H348V107H349V107H350V107H351V107H352V107H353V107H354V107H355V107H356V107H357V107H358V107H359V107H360V107H361V107H362V107H363V107H364V107H365V107H366V107H367V107H368V107H369V107H370V107H371V107H372V107H373V107H374V107H375V107H376V107H377V107H378V107H379V107H380V107H381V107H382V107H383V107H384V107H385V107H386V107H387V107H388V107H389V107H390V107H391V107H392V107H393V107H394V107H395V107H396V107H397V118H398V119H399V120H400V121H401V123H402V121H403V123H404V123H405V123H406V121H407V122H408V122H409V121H410V122H411V121H412V121H413V121H414V121H415V121H416V120H417V121H418V122H419V120H420V121H421V121H422V121H423V123H424V121H425V123H426V121H427V123H428V121H429V122H430V120H431V122H432V121H433V121H434V121H435V120H436V121H437V122H438V121H439V122H440V123H441V122H442V121H443V121H444V121H445V122H446V121H447V121H448V121H449V121H450V124H451V123H452V124H453V124H454V122H455V125H456V122H457V123H458V121H459V122H460V123H461V123H462V124H463V123H464V121H465V120H466V124H467V121H468V124H469V121H470V121H471V122H472V121H473V121H474V121H475V123H476V121H477V121H478V121H479V121H480V123H481V123H482V117H483V117H484V117H485V118H486V117H487V118H488V119H489V118H490V118H491V119H492V118H493V119H494V118H495V119H496V117H497V119H498V118H499V118H500V118H501V118H502V119H503V119H504V119H505V119H506V118H507V118H508V117H509V118H510V119H511V118H512V118H513V118H514V119H515V118H516V119H517V119H518V119H519V118H520V117H521V118H522V118H523V118H524V118H525V118H526V118H527V118H528V118H529V118H530V119H531V119H532V117H533V119H534V119H535V119H536V117H537V118H538V118H539V117H540V118H541V117H542V118H543V118H544V118H545V118H546V118H547V118H548V119H549V118H550V118H551V119H552V117H553V118H554V118H555V119H556V118H557V118H558V119H559V118H560V118H561V117H562V119H563V119H564V118H565V118H566V118H567V118H568V119H569V119H570V118H571V118H572V118H573V117H574V118H575V118H576V118H577V118H578V117H579V118H580V118H581V118H582V118H583V119H584V117H585V119H586V118H587V118H588V119H589V118H590V119H591V118H592V118H593V118H594V119H595V117H596V119H597V119H598V118H599V118H600V119H601V118H602V119H603V118H604V118H605V118H606V119H607V119H608V118H609V119H610V118H611V117H612V117H613V119H614V118H615V118H616V118H617V118H618V119H619V119H620V119H621V118H622V118H623V119H624V118H625V118H626V118H627V118H628V119H629V117H630V118H631V118H632V119H633V118H634V118H635V119H636V107H637V107H638V107H639V107H640V107H641V107H642V107H643V107H644V107H645V107H646V107H647V107H648V107H649V107H650V107H651V107H652V107H653V107H654V107H655V107H656V107H657V107H658V107H659V107H660V107H661V107H662V107H663V107H664V107H665V107H666V107H667V107H668V107H669V107H670V107H671V107H672V107H673V107H674V107H675V107H676V107H677V107H678V107H679V107H680V107H681V107H682V107H683V107H684V107H685V107H686V107H687V107H688V107H689V107H690V107H691V107H692V107H693V107H694V107H695V107H696V107H697V107H698V107H699V107H700V107H701V107H702V107H703V107H704V107H705V107H706V107H707V107H708V107H709V107H710V107H711V107H712V107H713V107H714V107H715V107H716V107H717V107H718V107H719V107H720V107H721V107H722V107H723V107H724V107H725V107H726V107H727V107H728V107H729V107H730V107H731V107H732V107H733V107H734V107H735V107H736V107H737V107H738V107H739V107H740V107H741V107H742V107H743V107H744V107H745V107H746V107H747V107H748V107H749V107H750V107H751V107H752V107H753V107H754V107H755V107H756V107H757V107H758V107H759V107H760V107H761V107H762V107H763V107H764V107H765V107H766V107H767V107H768V107H769V107H770V107H771V107H772V107H773V107H774V107H775V107H776V107H777V107H778V107H779V107H780V107H781V107H782V107H783V107H784V107H785V107H786V107H787V107H788V107H789V107H790V107H791V107H792V107H793V107H794V107H795V107H796V107H797V107H798V107H799V107H800V107H801V107H802V107H803V107H804V107H805V107H806V107H807V107H808V107H809V107H810V107H811V107H812V107H813V107H814V107H815V107H816V107H817V107H818V107H819V107H820V107H821V107H822V107H823V107H824V107H825V107H826V107H827V107H828V107H829V107H830V107H831V107H832V107H833V107H834V107H835V107H836V107H837V107H838V107H839V107H840V107H841V107H842V107H843V107H844V107H845V107H846V107H847V107H848V107H849V107H850V107H851V107H852V107H853V107H854V107H855V107H856V107H857V107H858V107H859V107H860V107H861V107H862V107H863V107H864V107H865V107H866V107H867V107H868V107H869V107H870V107H871V107H872V107H873V107H874V107H875V107H876V107H877V118H878V119H879V120H880V121H881V122H882V121H883V121H884V122H885V123H886V121H887V122H888V123H889V122H890V122H891V121H892V122H893V121H894V120H895V121H896V123H897V121H898V121H899V121H900V123H901V121H902V121H903V121H904V120H905V121H906V121H907V122H908V122H909V121H910V120H911V121H912V123H913V122H914V121H915V122H916V122H917V123H918V121H919V121H920V123H921V121H922V122H923V121H924V121H925V122H926V121H927V122H928V121H929V121H930V124H931V123H932V122H933V123H934V123H935V123H936V122H937V123H938V123H939V122H940V124H941V124H942V124H943V124H944V123H945V123H946V125H947V121H948V123H949V121H950V122H951V121H952V121H953V121H954V122H955V121H956V121H957V121H958V121H959V121H960V123H961V120H962V118H963V119H964V118H965V118H966V118H967V119H968V119H969V118H970V119H971V118H972V118H973V118H974V119H975V119H976V118H977V118H978V117H979V119H980V118H981V117H982V119H983V118H984V119H985V119H986V118H987V118H988V118H989V118H990V117H991V118H992V118H993V118H994V119H995V118H996V118H997V118H998V118H999V118H1000V117H1001V119H1002V119H1003V118H1004V117H1005V118H1006V117H1007V118H1008V118H1009V119H1010V118H1011V118H1012V119H1013V117H1014V119H1015V118H1016V117H1017V117H1018V118H1019V119H1020V118H1021V118H1022V118H1023V118H1024V118H1025V118H1026V117H1027V118H1028V118H1029V119H1030V118H1031V118H1032V118H1033V118H1034V118H1035V118H1036V118H1037V118H1038V119H1039V118H1040V118H1041V119H1042V118H1043V117H1044V119H1045V118H1046V118H1047V117H1048V118H1049V118H1050V117H1051V118H1052V118H1053V117H1054V119H1055V118H1056V118H1057V118H1058V119H1059V118H1060V119H1061V119H1062V119H1063V118H1064V119H1065V119H1066V119H1067V118H1068V118H1069V118H1070V118H1071V118H1072V118H1073V118H1074V118H1075V118H1076V118H1077V118H1078V119H1079V118H1080V119H1081V118H1082V118H1083V119H1084V117H1085V118H1086V118H1087V118H1088V119H1089V118H1090V118H1091V119H1092V118H1093V118H1094V118H1095V118H1096V118H1097V118H1098V119H1099V119H1100V119H1101V119H1102V118H1103V118H1104V118H1105V117H1106V117H1107V118H1108V118H1109V118H1110V117H1111V118H1112V117H1113V118H1114V118H1115V119H1116V107H1117V107H1118V107H1119V107H1120V107H1121V107H1122V107H1123V107H1124V107H1125V107H1126V107H1127V107H1128V107H1129V107H1130V107H1131V107H1132V107H1133V107H1134V107H1135V107H1136V107H1137V107H1138V107H1139V107H1140V107H1141V107H1142V107H1143V107H1144V107H1145V107H1146V107H1147V107H1148V107H1149V107H1150V107H1151V107H1152V107H1153V107H1154V107H1155V107H1156V107H1157V107H1158V107H1159V107H1160V107H1161V107H1162V107H1163V107H1164V107H1165V107H1166V107H1167V107H1168V107H1169V107H1170V107H1171V107H1172V107H1173V107H1174V107H1175V107H1176V107H1177V107H1178V107H1179V107H1180V107H1181V107H1182V107H1183V107H1184V107H1185V107H1186V107H1187V107H1188V107H1189V107H1190V107H1191V107H1192V107H1193V107H1194V107H1195V107H1196V107H1197V107H1198V107H1199V107H1200V107H1201V107H1202V107H1203V107H1204V107H1205V107H1206V107H1207V107H1208V107H1209V107H1210V107H1211V107H1212V107H1213V107H1214V107H1215V107H1216V107H1217V107H1218V107H1219V107H1220V107H1221V107H1222V107H1223V107H1224V107H1225V107H1226V107H1227V107H1228V107H1229V107H1230V107H1231V107H1232V107H1233V107H1234V107H1235V107H1236V107H1237V107H1238V107H1239V107H1240V107H1241V107H1242V107H1243V107H1244V107H1245V107H1246V107H1247V107H1248V107H1249V107H1250V107H1251V107H1252V107H1253V107H1254V107H1255V107H1256V107H1257V107H1258V107H1259V107H1260V107H1261V107H1262V107H1263V107H1264V107H1265V107H1266V107H1267V107H1268V107H1269V107H1270V189H1269V189H1268V189H1267V194H1266V189H1265V201H1264V193H1263V189H1262V191H1261V189H1260V200H1259V199H1258V198H1257V190H1256V191H1255V198H1254V194H1253V191H1252V198H1251V191H1250V189H1249V190H1248V190H1247V189H1246V189H1245V201H1244V191H1243V190H1242V195H1241V191H1240V193H1239V197H1238V196H1237V189H1236V200H1235V198H1234V189H1233V189H1232V199H1231V192H1230V196H1229V189H1228V192H1227V193H1226V198H1225V195H1224V198H1223V196H1222V198H1221V190H1220V189H1219V190H1218V198H1217V189H1216V190H1215V193H1214V189H1213V191H1212V189H1211V190H1210V189H1209V189H1208V189H1207V190H1206V190H1205V197H1204V198H1203V190H1202V189H1201V196H1200V189H1199V189H1198V195H1197V190H1196V190H1195V193H1194V194H1193V200H1192V191H1191V197H1190V189H1189V197H1188V189H1187V189H1186V189H1185V199H1184V189H1183V191H1182V189H1181V199H1180V196H1179V189H1178V190H1177V198H1176V190H1175V189H1174V195H1173V189H1172V194H1171V190H1170V196H1169V189H1168V193H1167V189H1166V194H1165V189H1164V189H1163V190H1162V192H1161V191H1160V189H1159V194H1158V189H1157V197H1156V193H1155V198H1154V189H1153V189H1152V200H1151V189H1150V198H1149V189H1148V198H1147V190H1146V191H1145V189H1144V189H1143V189H1142V189H1141V189H1140V193H1139V190H1138V189H1137V189H1136V189H1135V190H1134V191H1133V198H1132V190H1131V189H1130V189H1129V189H1128V193H1127V190H1126V191H1125V190H1124V195H1123V189H1122V190H1121V195H1120V189H1119V196H1118V189H1117V190H1116V186H1115V186H1114V186H1113V186H1112V187H1111V186H1110V187H1109V187H1108V186H1107V186H1106V186H1105V186H1104V187H1103V186H1102V186H1101V187H1100V186H1099V186H1098V186H1097V187H1096V186H1095V186H1094V186H1093V186H1092V186H1091V186H1090V186H1089V186H1088V186H1087V186H1086V186H1085V186H1084V186H1083V186H1082V186H1081V186H1080V187H1079V186H1078V187H1077V186H1076V187H1075V187H1074V187H1073V186H1072V186H1071V187H1070V187H1069V186H1068V187H1067V186H1066V186H1065V187H1064V186H1063V186H1062V187H1061V186H1060V186H1059V186H1058V187H1057V187H1056V186H1055V187H1054V186H1053V186H1052V186H1051V186H1050V186H1049V186H1048V186H1047V187H1046V186H1045V186H1044V186H1043V186H1042V186H1041V186H1040V186H1039V187H1038V186H1037V187H1036V187H1035V186H1034V187H1033V186H1032V187H1031V186H1030V186H1029V186H1028V186H1027V186H1026V186H1025V186H1024V186H1023V186H1022V187H1021V187H1020V187H1019V187H1018V186H1017V186H1016V186H1015V186H1014V187H1013V186H1012V186H1011V186H1010V186H1009V187H1008V187H1007V186H1006V186H1005V186H1004V186H1003V187H1002V186H1001V187H1000V186H999V186H998V186H997V186H996V186H995V187H994V186H993V186H992V186H991V187H990V186H989V186H988V186H987V187H986V186H985V186H984V187H983V186H982V186H981V186H980V186H979V186H978V186H977V187H976V186H975V187H974V187H973V187H972V186H971V186H970V186H969V186H968V187H967V187H966V186H965V186H964V186H963V187H962V186H961V187H960V186H959V186H958V186H957V186H956V186H955V186H954V186H953V186H952V187H951V186H950V187H949V186H948V186H947V186H946V186H945V186H944V186H943V186H942V186H941V186H940V186H939V186H938V186H937V186H936V186H935V186H934V186H933V186H932V187H931V186H930V186H929V186H928V186H927V186H926V186H925V186H924V187H923V186H922V186H921V186H920V186H919V186H918V186H917V186H916V186H915V186H914V186H913V186H912V186H911V187H910V186H909V187H908V186H907V186H906V186H905V187H904V186H903V187H902V186H901V186H900V186H899V186H898V186H897V186H896V186H895V186H894V186H893V186H892V187H891V186H890V186H889V186H888V187H887V186H886V186H885V186H884V187H883V187H882V187H881V186H880V186H879V186H878V186H877V194H876V191H875V191H874V194H873V189H872V190H871V189H870V190H869V190H868V189H867V189H866V190H865V196H864V197H863V189H862V190H861V190H860V189H859V195H858V196H857V197H856V194H855V193H854V189H853V189H852V200H851V189H850V189H849V189H848V199H847V189H846V199H845V189H844V189H843V189H842V198H841V189H840V190H839V195H838V189H837V189H836V190H835V191H834V195H833V190H832V197H831V189H830V190H829V189H828V189H827V189H826V189H825V197H824V189H823V199H822V189H821V199H820V191H819V189H818V198H817V191H816V191H815V195H814V197H813V191H812V198H811V197H810V201H809V197H808V196H807V189H806V194H805V191H804V189H803V196H802V189H801V189H800V190H799V193H798V190H797V198H796V198H795V189H794V189H793V190H792V190H791V190H790V190H789V197H788V195H787V195H786V189H785V189H784V190H783V189H782V191H781V189H780V194H779V189H778V196H777V194H776V189H775V189H774V197H773V191H772V189H771V199H770V189H769V189H768V190H767V193H766V189H765V190H764V189H763V190H762V195H761V196H760V197H759V190H758V192H757V198H756V199H755V199H754V198H753V198H752V191H751V197H750V201H749V192H748V192H747V201H746V194H745V189H744V189H743V192H742V195H741V189H740V189H739V199H738V189H737V200H736V191H735V193H734V197H733V189H732V194H731V189H730V198H729V189H728V190H727V189H726V191H725V197H724V190H723V190H722V189H721V192H720V196H719V189H718V197H717V191H716V197H715V190H714V189H713V189H712V195H711V198H710V189H709V195H708V196H707V189H706V189H705V191H704V191H703V189H702V190H701V195H700V190H699V197H698V190H697V189H696V190H695V189H694V189H693V198H692V198H691V194H690V189H689V193H688V193H687V189H686V197H685V190H684V195H683V191H682V191H681V190H680V200H679V193H678V190H677V198H676V189H675V189H674V189H673V198H672V196H671V190H670V190H669V189H668V200H667V191H666V191H665V189H664V190H663V189H662V189H661V196H660V190H659V191H658V193H657V189H656V190H655V189H654V189H653V190H652V190H651V189H650V195H649V199H648V198H647V190H646V199H645V199H644V191H643V200H642V189H641V197H640V190H639V199H638V194H637V189H636V186H635V187H634V186H633V186H632V186H631V186H630V187H629V186H628V186H627V186H626V186H625V187H624V187H623V186H622V186H621V186H620V186H619V186H618V187H617V186H616V186H615V186H614V186H613V186H612V186H611V186H610V186H609V186H608V186H607V186H606V186H605V186H604V187H603V187H602V186H601V187H600V186H599V186H598V186H597V187H596V186H595V186H594V186H593V187H592V186H591V186H590V186H589V186H588V186H587V187H586V186H585V186H584V186H583V186H582V186H581V186H580V187H579V187H578V186H577V187H576V186H575V186H574V186H573V186H572V186H571V186H570V187H569V186H568V186H567V186H566V186H565V186H564V186H563V186H562V186H561V186H560V186H559V186H558V187H557V186H556V186H555V187H554V186H553V186H552V186H551V186H550V186H549V186H548V186H547V186H546V186H545V186H544V186H543V186H542V186H541V186H540V186H539V186H538V186H537V186H536V186H535V186H534V186H533V186H532V187H531V186H530V186H529V186H528V186H527V187H526V186H525V187H524V186H523V187H522V187H521V186H520V186H519V186H518V186H517V186H516V186H515V187H514V187H513V186H512V187H511V186H510V186H509V186H508V186H507V186H506V186H505V187H504V187H503V186H502V186H501V186H500V187H499V186H498V186H497V186H496V187H495V186H494V186H493V186H492V186H491V186H490V186H489V186H488V186H487V187H486V186H485V186H484V187H483V186H482V186H481V186H480V186H479V186H478V186H477V186H476V186H475V186H474V186H473V186H472V187H471V186H470V186H469V186H468V187H467V187H466V186H465V186H464V186H463V187H462V186H461V186H460V186H459V186H458V186H457V186H456V186H455V186H454V186H453V186H452V187H451V186H450V187H449V187H448V186H447V186H446V186H445V186H444V187H443V186H442V186H441V186H440V186H439V186H438V186H437V186H436V186H435V186H434V186H433V186H432V186H431V186H430V186H429V187H428V186H427V186H426V187H425V186H424V186H423V186H422V187H421V186H420V186H419V186H418V186H417V186H416V186H415V186H414V187H413V186H412V186H411V186H410V186H409V186H408V186H407V186H406V186H405V186H404V187H403V186H402V186H401V186H400V186H399V186H398V186H397V197H396V189H395V201H394V190H393V198H392V189H391V189H390V190H389V189H388V189H387V189H386V195H385V189H384V198H383V191H382V190H381V189H380V191H379V189H378V195H377V196H376V190H375V190H374V191H373V189H372V189H371V194H370V189H369V190H368V189H367V189H366V193H365V190H364V191H363V194H362V190H361V196H360V194H359V190H358V189H357V189H356V189H355V189H354V198H353V189H352V195H351V192H350V194H349V190H348V197H347V189H346V190H345V198H344V190H343V189H342V189H341V195H340V197H339V200H338V189H337V189H336V196H335V189H334V190H333V200H332V190H331V196H330V190H329V190H328V190H327V189H326V190H325V199H324V197H323V190H322V189H321V191H320V200H319V189H318V198H317V194H316V189H315V189H314V196H313V194H312V199H311V193H310V198H309V190H308V198H307V190H306V197H305V193H304V198H303V193H302V194H301V190H300V189H299V196H298V189H297V189H296V197H295V191H294V197H293V197H292V190H291V189H290V190H289V189H288V189H287V189H286V190H285V190H284V189H283V190H282V189H281V196H280V189H279V195H278V195H277V198H276V189H275V189H274V192H273V191H272V196H271V196H270V195H269V190H268V190H267V194H266V189H265V189H264V189H263V190H262V191H261V196H260V194H259V196H258V197H257V189H256V189H255V189H254V191H253V196H252V190H251V190H250V189H249V189H248V195H247V199H246V194H245V194H244V193H243V190H242V190H241V193H240V194H239V195H238V189H237V196H236V199H235V189H234V189H233V189H232V190H231V190H230V198H229V189H228V194H227V197H226V189H225V191H224V197H223V189H222V190H221V189H220V189H219V197H218V189H217V196H216V196H215V198H214V189H213V189H212V196H211V195H210V189H209V194H208V191H207V189H206V199H205V201H204V196H203V196H202V194H201V190H200V196H199V193H198V189H197V189H196V190H195V189H194V189H193V198H192V190H191V200H190V190H189V189H188V190H187V195H186V189H185V197H184V198H183V189H182V197H181V199H180V190H179V189H178V189H177V190H176V190H175V194H174V189H173V195H172V194H171V189H170V189H169V194H168V189H167V190H166V196H165V189H164V192H163V190H162V193H161V198H160V196H159V190H158V198H157V197H156V186H155V186H154V186H153V186H152V186H151V186H150V186H149V186H148V186H147V186H146V186H145V186H144V187H143V186H142V186H141V186H140V187H139V186H138V186H137V186H136V186H135V186H134V187H133V186H132V186H131V187H130V187H129V186H128V186H127V186H126V186H125V186H124V186H123V186H122V186H121V186H120V186H119V186H118V186H117V186H116V187H115V186H114V187H113V187H112V186H111V186H110V186H109V186H108V186H107V186H106V186H105V186H104V186H103V186H102V186H101V186H100V186H99V186H98V186H97V186H96V186H95V187H94V186H93V186H92V186H91V186H90V186H89V186H88V186H87V186H86V186H85V186H84V186H83V186H82V186H81V187H80V186H79V186H78V187H77V186H76V186H75V186H74V186H73V187H72V186H71V186H70Z" fill="#800040"/><path d="M70 207H71V209H72V208H73V208H74V208H75V208H76V209H77V207H78V209H79V208H80V208H81V208H82V208H83V209H84V207H85V208H86V208H87V208H88V209H89V208H90V209H91V208H92V208H93V208H94V207H95V208H96V208H97V209H98V208H99V208H100V209H101V208H102V207H103V208H104V209H105V209H106V208H107V208H108V208H109V207H110V208H111V209H112V208H113V209H114V207H115V207H116V208H117V208H118V207H119V209H120V209H121V208H122V208H123V208H124V207H125V207H126V208H127V208H128V209H129V208H130V208H131V208H132V208H133V209H134V209H135V207H136V208H137V208H138V207H139V208H140V208H141V208H142V208H143V208H144V208H145V208H146V208H147V207H148V208H149V208H150V209H151V208H152V208H153V209H154V208H155V208H156V218H157V218H158V219H159V220H160V220H161V220H162V221H163V222H164V222H165V222H166V222H167V222H168V222H169V222H170V222H171V222H172V222H173V222H174V222H175V222H176V223H177V223H178V223H179V223H180V223H181V223H182V223H183V223H184V223H185V223H186V223H187V223H188V222H189V223H190V223H191V223H192V223H193V222H194V222H195V223H196V222H197V223H198V223H199V223H200V223H201V222H202V223H203V223H204V223H205V223H206V223H207V223H208V223H209V223H210V223H211V223H212V223H213V223H214V223H215V223H216V222H217V223H218V223H219V223H220V222H221V223H222V223H223V223H224V223H225V223H226V223H227V223H228V223H229V223H230V223H231V223H232V223H233V223H234V223H235V223H236V223H237V223H238V223H239V223H240V223H241V223H242V223H243V223H244V223H245V223H246V223H247V223H248V223H249V223H250V223H251V223H252V223H253V223H254V222H255V222H256V223H257V223H258V222H259V223H260V222H261V223H262V223H263V223H264V223H265V223H266V223H267V223H268V222H269V223H270V223H271V223H272V223H273V223H274V223H275V223H276V223H277V223H278V223H279V223H280V223H281V223H282V223H283V223H284V223H285V223H286V223H287V223H288V223H289V223H290V223H291V223H292V223H293V223H294V223H295V223H296V223H297V223H298V223H299V223H300V223H301V223H302V223H303V223H304V223H305V223H306V223H307V223H308V223H309V223H310V223H311V223H312V223H313V223H314V223H315V223H316V223H317V223H318V223H319V223H320V223H321V223H322V223H323V222H324V223H325V223H326V223H327V223H328V223H329V223H330V223H331V222H332V223H333V223H334V223H335V223H336V223H337V223H338V223H339V223H340V223H341V223H342V222H343V223H344V223H345V223H346V223H347V223H348V223H349V223H350V223H351V223H352V223H353V223H354V223H355V223H356V222H357V223H358V223H359V223H360V223H361V223H362V223H363V223H364V223H365V223H366V223H367V223H368V223H369V223H370V223H371V223H372V223H373V223H374V223H375V223H376V223H377V223H378V222H379V223H380V223H381V223H382V223H383V223H384V223H385V223H386V222H387V223H388V222H389V223H390V223H391V223H392V222H393V223H394V223H395V223H396V223H397V239H398V239H399V239H400V239H401V239H402V239H403V239H404V239H405V239H406V239H407V239H408V239H409V239H410V239H411V239H412V239H413V239H414V239H415V239H416V239H417V239H418V239H419V239H420V239H421V239H422V239H423V238H424V239H425V239H426V239H427V239H428V239H429V239H430V239H431V239H432V239H433V239H434V239H435V239H436V239H437V239H438V238H439V239H440V239H441V239H442V239H443V239H444V239H445V239H446V239H447V239H448V239H449V239H450V239H451V238H452V239H453V239H454V239H455V239H456V239H457V239H458V239H459V239H460V239H461V239H462V239H463V239H464V239H465V239H466V239H467V239H468V238H469V239H470V239H471V239H472V238H473V239H474V239H475V238H476V239H477V239H478V238H479V239H480V239H481V239H482V208H483V207H484V208H485V208H486V208H487V209H488V209H489V209H490V208H491V208H492V207H493V208H494V208H495V208H496V208H497V209H498V207H499V208H500V208H501V208H502V208H503V208H504V207H505V209H506V208H507V209H508V207H509V209H510V207H511V208H512V209H513V208H514V208H515V208H516V208H517V207H518V208H519V208H520V208H521V208H522V209H523V208H524V209H525V207H526V209H527V208H528V208H529V209H530V207H531V207H532V208H533V208H534V208H535V208H536V208H537V208H538V208H539V208H540V208H541V209H542V207H543V207H544V207H545V208H546V208H547V208H548V208H549V208H550V208H551V207H552V208H553V208H554V208H555V208H556V208H557V208H558V208H559V207H560V209H561V209H562V208H563V208H564V208H565V207H566V208H567V209H568V207H569V208H570V208H571V209H572V209H573V208H574V209H575V208H576V208H577V208H578V207H579V208H580V208H581V208H582V208H583V208H584V209H585V208H586V208H587V208H588V209H589V207H590V209H591V208H592V208H593V208H594V208H595V208H596V209H597V207H598V208H599V207H600V208H601V207H602V208H603V207H604V208H605V209H606V207H607V208H608V207H609V207H610V209H611V208H612V208H613V208H614V209H615V208H616V208H617V208H618V209H619V208H620V207H621V208H622V208H623V208H624V209H625V209H626V209H627V208H628V207H629V208H630V209H631V209H632V207H633V208H634V209H635V208H636V204H637V217H638V219H639V220H640V220H641V220H642V221H643V222H644V222H645V222H646V222H647V222H648V222H649V222H650V222H651V222H652V222H653V222H654V222H655V222H656V223H657V223H658V223H659V223H660V223H661V223H662V223H663V223H664V223H665V223H666V222H667V222H668V223H669V223H670V223H671V223H672V223H673V223H674V223H675V223H676V223H677V223H678V223H679V223H680V223H681V223H682V223H683V222H684V223H685V223H686V223H687V223H688V223H689V223H690V223H691V223H692V223H693V223H694V223H695V223H696V223H697V223H698V223H699V223H700V223H701V223H702V223H703V223H704V223H705V223H706V223H707V223H708V223H709V223H710V223H711V223H712V222H713V223H714V223H715V223H716V223H717V223H718V223H719V223H720V223H721V223H722V223H723V223H724V223H725V223H726V223H727V223H728V222H729V223H730V223H731V223H732V223H733V223H734V223H735V223H736V223H737V223H738V223H739V223H740V223H741V223H742V223H743V223H744V223H745V223H746V223H747V223H748V223H749V223H750V223H751V223H752V223H753V223H754V223H755V223H756V223H757V223H758V223H759V223H760V223H761V223H762V223H763V223H764V223H765V223H766V223H767V223H768V223H769V223H770V223H771V223H772V223H773V223H774V223H775V222H776V223H777V223H778V223H779V223H780V222H781V223H782V223H783V223H784V223H785V223H786V222H787V223H788V223H789V223H790V223H791V223H792V223H793V223H794V223H795V223H796V223H797V223H798V223H799V223H800V223H801V223H802V223H803V223H804V223H805V223H806V223H807V223H808V223H809V223H810V223H811V223H812V223H813V223H814V222H815V222H816V223H817V223H818V223H819V223H820V223H821V223H822V223H823V223H824V223H825V223H826V223H827V223H828V223H829V223H830V223H831V223H832V223H833V222H834V223H835V223H836V223H837V223H838V223H839V223H840V223H841V223H842V223H843V223H844V223H845V223H846V223H847V223H848V222H849V223H850V222H851V223H852V223H853V223H854V223H855V223H856V223H857V223H858V223H859V223H860V223H861V223H862V223H863V223H864V223H865V223H866V223H867V223H868V223H869V223H870V223H871V223H872V223H873V223H874V223H875V222H876V223H877V239H878V239H879V239H880V239H881V239H882V239H883V239H884V239H885V239H886V238H887V239H888V239H889V239H890V239H891V239H892V239H893V239H894V239H895V239H896V239H897V239H898V239H899V239H900V238H901V239H902V239H903V239H904V238H905V239H906V239H907V239H908V239H909V239H910V239H911V239H912V239H913V239H914V238H915V239H916V239H917V239H918V239H919V238H920V238H921V239H922V239H923V238H924V239H925V239H926V238H927V239H928V239H929V239H930V239H931V239H932V239H933V239H934V239H935V239H936V239H937V239H938V239H939V239H940V238H941V239H942V238H943V239H944V239H945V239H946V239H947V239H948V239H949V239H950V239H951V239H952V239H953V238H954V239H955V239H956V239H957V238H958V239H959V239H960V239H961V238H962V208H963V208H964V208H965V207H966V208H967V208H968V208H969V209H970V207H971V208H972V208H973V208H974V208H975V208H976V207H977V209H978V207H979V208H980V208H981V209H982V208H983V208H984V207H985V207H986V208H987V207H988V208H989V207H990V208H991V207H992V208H993V208H994V207H995V209H996V207H997V208H998V209H999V208H1000V207H1001V207H1002V208H1003V208H1004V209H1005V207H1006V208H1007V207H1008V208H1009V208H1010V208H1011V209H1012V207H1013V208H1014V208H1015V209H1016V207H1017V208H1018V207H1019V208H1020V208H1021V208H1022V209H1023V208H1024V208H1025V207H1026V208H1027V207H1028V209H1029V208H1030V208H1031V207H1032V208H1033V208H1034V207H1035V209H1036V208H1037V209H1038V207H1039V208H1040V207H1041V207H1042V208H1043V209H1044V208H1045V208H1046V208H1047V209H1048V209H1049V208H1050V209H1051V207H1052V209H1053V209H1054V208H1055V208H1056V208H1057V208H1058V208H1059V207H1060V207H1061V208H1062V208H1063V208H1064V208H1065V208H1066V208H1067V208H1068V208H1069V208H1070V209H1071V208H1072V208H1073V208H1074V207H1075V208H1076V208H1077V208H1078V208H1079V208H1080V209H1081V208H1082V209H1083V208H1084V208H1085V208H1086V208H1087V208H1088V208H1089V208H1090V208H1091V209H1092V208H1093V208H1094V208H1095V208H1096V209H1097V208H1098V208H1099V208H1100V207H1101V208H1102V207H1103V208H1104V209H1105V208H1106V207H1107V207H1108V208H1109V207H1110V208H1111V208H1112V208H1113V208H1114V208H1115V209H1116V204H1117V218H1118V219H1119V220H1120V220H1121V220H1122V221H1123V222H1124V222H1125V222H1126V222H1127V222H1128V222H1129V221H1130V222H1131V222H1132V222H1133V222H1134V221H1135V222H1136V222H1137V223H1138V223H1139V223H1140V223H1141V223H1142V223H1143V223H1144V223H1145V223H1146V223H1147V223H1148V223H1149V223H1150V223H1151V223H1152V223H1153V223H1154V223H1155V223H1156V223H1157V222H1158V223H1159V223H1160V223H1161V223H1162V223H1163V223H1164V223H1165V223H1166V223H1167V223H1168V223H1169V223H1170V223H1171V223H1172V223H1173V223H1174V223H1175V223H1176V222H1177V223H1178V223H1179V223H1180V223H1181V223H1182V223H1183V223H1184V223H1185V223H1186V223H1187V223H1188V223H1189V222H1190V223H1191V223H1192V223H1193V223H1194V223H1195V223H1196V223H1197V223H1198V223H1199V223H1200V223H1201V223H1202V223H1203V223H1204V223H1205V223H1206V223H1207V223H1208V223H1209V223H1210V223H1211V223H1212V223H1213V223H1214V223H1215V223H1216V223H1217V223H1218V223H1219V223H1220V223H1221V223H1222V223H1223V223H1224V223H1225V223H1226V223H1227V223H1228V223H1229V223H1230V223H1231V223H1232V223H1233V223H1234V223H1235V223H1236V223H1237V223H1238V223H1239V223H1240V223H1241V223H1242V223H1243V223H1244V223H1245V223H1246V223H1247V223H1248V223H1249V223H1250V223H1251V223H1252V223H1253V222H1254V222H1255V223H1256V223H1257V223H1258V223H1259V223H1260V223H1261V223H1262V223H1263V223H1264V223H1265V223H1266V223H1267V223H1268V223H1269V223H1270V242H1269V243H1268V242H1267V242H1266V242H1265V242H1264V242H1263V242H1262V242H1261V242H1260V242H1259V242H1258V242H1257V242H1256V242H1255V242H1254V242H1253V242H1252V242H1251V242H1250V242H1249V242H1248V242H1247V242H1246V242H1245V242H1244V242H1243V242H1242V242H1241V242H1240V242H1239V242H1238V242H1237V242H1236V242H1235V242H1234V242H1233V242H1232V242H1231V242H1230V242H1229V242H1228V242H1227V242H1226V242H1225V242H1224V242H1223V242H1222V242H1221V242H1220V242H1219V242H1218V242H1217V242H1216V242H1215V242H1214V242H1213V242H1212V242H1211V242H1210V242H1209V242H1208V242H1207V242H1206V242H1205V242H1204V242H1203V243H1202V242H1201V242H1200V242H1199V243H1198V242H1197V242H1196V242H1195V243H1194V242H1193V242H1192V242H1191V242H1190V242H1189V242H1188V242H1187V242H1186V242H1185V242H1184V242H1183V242H1182V242H1181V242H1180V242H1179V242H1178V242H1177V242H1176V242H1175V242H1174V242H1173V242H1172V242H1171V242H1170V243H1169V242H1168V242H1167V242H1166V242H1165V242H1164V242H1163V242H1162V242H1161V242H1160V242H1159V242H1158V242H1157V242H1156V242H1155V242H1154V242H1153V242H1152V242H1151V242H1150V242H1149V242H1148V242H1147V242H1146V242H1145V242H1144V242H1143V242H1142V242H1141V242H1140V243H1139V242H1138V242H1137V242H1136V243H1135V243H1134V243H1133V243H1132V243H1131V243H1130V243H1129V244H1128V244H1127V244H1126V244H1125V245H1124V247H1123V248H1122V249H1121V250H1120V251H1119V253H1118V254H1117V255H1116V234H1115V232H1114V233H1113V232H1112V234H1111V232H1110V232H1109V232H1108V234H1107V232H1106V233H1105V233H1104V232H1103V232H1102V232H1101V233H1100V232H1099V233H1098V233H1097V233H1096V232H1095V233H1094V233H1093V234H1092V233H1091V233H1090V232H1089V233H1088V232H1087V234H1086V234H1085V232H1084V233H1083V232H1082V232H1081V234H1080V234H1079V232H1078V233H1077V232H1076V232H1075V232H1074V233H1073V234H1072V233H1071V233H1070V233H1069V234H1068V233H1067V232H1066V233H1065V232H1064V232H1063V233H1062V232H1061V233H1060V232H1059V232H1058V232H1057V232H1056V232H1055V233H1054V233H1053V232H1052V232H1051V232H1050V232H1049V234H1048V233H1047V233H1046V233H1045V232H1044V234H1043V232H1042V233H1041V233H1040V234H1039V234H1038V232H1037V232H1036V232H1035V232H1034V234H1033V234H1032V232H1031V233H1030V232H1029V233H1028V232H1027V233H1026V232H1025V233H1024V232H1023V232H1022V234H1021V232H1020V232H1019V232H1018V232H1017V233H1016V233H1015V233H1014V234H1013V232H1012V233H1011V232H1010V232H1009V234H1008V233H1007V234H1006V232H1005V234H1004V232H1003V233H1002V232H1001V232H1000V233H999V234H998V232H997V233H996V233H995V232H994V232H993V232H992V232H991V232H990V233H989V232H988V233H987V232H986V232H985V233H984V232H983V232H982V233H981V234H980V233H979V234H978V234H977V233H976V232H975V232H974V234H973V233H972V234H971V232H970V232H969V233H968V232H967V232H966V232H965V234H964V232H963V232H962V240H961V241H960V240H959V240H958V240H957V240H956V241H955V240H954V240H953V240H952V240H951V240H950V240H949V240H948V240H947V241H946V240H945V240H944V240H943V241H942V241H941V240H940V240H939V240H938V241H937V240H936V240H935V240H934V240H933V240H932V240H931V240H930V240H929V240H928V240H927V240H926V240H925V240H924V241H923V240H922V240H921V240H920V240H919V240H918V240H917V240H916V240H915V241H914V240H913V241H912V240H911V240H910V240H909V240H908V240H907V240H906V240H905V240H904V241H903V240H902V240H901V240H900V240H899V240H898V241H897V240H896V240H895V240H894V240H893V240H892V240H891V240H890V240H889V240H888V240H887V240H886V240H885V240H884V240H883V240H882V240H881V240H880V241H879V240H878V240H877V242H876V242H875V242H874V242H873V242H872V242H871V242H870V242H869V242H868V242H867V242H866V242H865V242H864V242H863V242H862V242H861V242H860V242H859V242H858V242H857V242H856V242H855V242H854V242H853V242H852V242H851V242H850V242H849V242H848V242H847V242H846V242H845V242H844V242H843V242H842V242H841V243H840V243H839V242H838V242H837V242H836V242H835V242H834V243H833V242H832V242H831V242H830V242H829V242H828V242H827V242H826V242H825V242H824V242H823V242H822V242H821V242H820V242H819V242H818V242H817V243H816V242H815V242H814V242H813V242H812V242H811V242H810V242H809V242H808V242H807V243H806V242H805V242H804V242H803V242H802V242H801V242H800V242H799V242H798V242H797V242H796V242H795V242H794V242H793V242H792V242H791V243H790V242H789V242H788V242H787V242H786V242H785V243H784V242H783V242H782V242H781V242H780V242H779V242H778V242H777V242H776V242H775V242H774V242H773V242H772V242H771V242H770V242H769V242H768V242H767V243H766V242H765V242H764V242H763V242H762V242H761V242H760V242H759V242H758V242H757V242H756V242H755V242H754V242H753V242H752V242H751V242H750V242H749V242H748V242H747V242H746V242H745V242H744V242H743V242H742V242H741V242H740V242H739V242H738V242H737V242H736V242H735V242H734V242H733V242H732V242H731V242H730V242H729V242H728V242H727V242H726V242H725V242H724V242H723V242H722V242H721V242H720V242H719V242H718V242H717V242H716V242H715V242H714V242H713V242H712V243H711V243H710V242H709V242H708V242H707V242H706V242H705V242H704V243H703V242H702V242H701V242H700V242H699V242H698V242H697V242H696V242H695V242H694V242H693V242H692V242H691V242H690V242H689V242H688V242H687V242H686V242H685V242H684V242H683V242H682V242H681V242H680V242H679V242H678V242H677V243H676V242H675V242H674V242H673V242H672V242H671V242H670V242H669V242H668V242H667V242H666V242H665V242H664V242H663V242H662V242H661V242H660V242H659V242H658V242H657V242H656V243H655V243H654V243H653V244H652V243H651V243H650V243H649V244H648V244H647V244H646V244H645V245H644V246H643V248H642V249H641V250H640V251H639V253H638V255H637V255H636V232H635V233H634V232H633V232H632V232H631V234H630V234H629V233H628V234H627V232H626V232H625V232H624V232H623V232H622V232H621V232H620V232H619V232H618V234H617V232H616V233H615V234H614V232H613V232H612V233H611V232H610V233H609V233H608V233H607V232H606V233H605V234H604V234H603V232H602V232H601V232H600V233H599V232H598V232H597V233H596V232H595V232H594V233H593V232H592V232H591V233H590V233H589V232H588V234H587V232H586V233H585V233H584V232H583V233H582V234H581V232H580V232H579V234H578V232H577V233H576V232H575V234H574V233H573V232H572V232H571V233H570V232H569V232H568V232H567V234H566V232H565V232H564V233H563V232H562V233H561V232H560V233H559V233H558V232H557V232H556V233H555V233H554V234H553V232H552V232H551V232H550V234H549V233H548V233H547V232H546V234H545V232H544V232H543V232H542V233H541V232H540V232H539V233H538V233H537V232H536V232H535V233H534V234H533V232H532V232H531V232H530V232H529V232H528V232H527V232H526V232H525V232H524V233H523V232H522V232H521V232H520V232H519V232H518V233H517V233H516V232H515V232H514V233H513V233H512V232H511V233H510V232H509V234H508V232H507V234H506V233H505V232H504V232H503V232H502V233H501V232H500V233H499V234H498V233H497V233H496V233H495V232H494V233H493V233H492V234H491V232H490V234H489V232H488V232H487V233H486V232H485V234H484V233H483V232H482V240H481V240H480V241H479V240H478V240H477V240H476V240H475V240H474V241H473V241H472V240H471V241H470V240H469V240H468V241H467V241H466V241H465V240H464V240H463V240H462V240H461V240H460V240H459V240H458V240H457V241H456V240H455V240H454V240H453V240H452V240H451V240H450V240H449V240H448V240H447V240H446V240H445V241H444V240H443V240H442V240H441V240H440V240H439V240H438V240H437V240H436V240H435V240H434V240H433V240H432V240H431V240H430V241H429V241H428V240H427V240H426V240H425V241H424V240H423V240H422V240H421V240H420V240H419V241H418V240H417V240H416V240H415V240H414V240H413V240H412V240H411V240H410V241H409V240H408V240H407V240H406V240H405V241H404V240H403V240H402V240H401V240H400V240H399V240H398V240H397V242H396V242H395V242H394V242H393V242H392V242H391V242H390V242H389V242H388V242H387V242H386V243H385V242H384V242H383V242H382V242H381V242H380V242H379V242H378V242H377V242H376V242H375V242H374V242H373V242H372V242H371V242H370V242H369V242H368V242H367V242H366V243H365V242H364V243H363V243H362V242H361V242H360V242H359V242H358V242H357V242H356V242H355V242H354V243H353V242H352V242H351V242H350V242H349V242H348V242H347V242H346V242H345V242H344V242H343V242H342V242H341V242H340V242H339V242H338V242H337V242H336V242H335V242H334V243H333V242H332V242H331V242H330V242H329V242H328V243H327V242H326V242H325V242H324V242H323V242H322V242H321V242H320V242H319V243H318V242H317V242H316V242H315V242H314V242H313V242H312V242H311V242H310V242H309V242H308V242H307V242H306V242H305V243H304V242H303V242H302V242H301V242H300V242H299V242H298V242H297V242H296V242H295V242H294V242H293V242H292V242H291V242H290V242H289V242H288V242H287V242H286V242H285V242H284V242H283V242H282V242H281V242H280V242H279V242H278V242H277V242H276V243H275V242H274V242H273V242H272V243H271V242H270V243H269V242H268V242H267V242H266V242H265V242H264V242H263V243H262V242H261V242H260V242H259V242H258V242H257V242H256V242H255V242H254V242H253V242H252V242H251V242H250V242H249V243H248V242H247V242H246V242H245V242H244V242H243V242H242V242H241V242H240V242H239V242H238V242H237V242H236V242H235V243H234V242H233V242H232V242H231V242H230V242H229V242H228V243H227V242H226V242H225V242H224V242H223V242H222V242H221V242H220V242H219V242H218V242H217V242H216V242H215V242H214V242H213V242H212V242H211V242H210V242H209V242H208V242H207V242H206V242H205V242H204V242H203V242H202V242H201V242H200V242H199V242H198V242H197V242H196V242H195V242H194V242H193V242H192V242H191V242H190V242H189V243H188V242H187V242H186V242H185V242H184V242H183V242H182V242H181V242H180V242H179V242H178V242H177V242H176V243H175V244H174V243H173V243H172V243H171V243H170V243H169V244H168V244H167V244H166V244H165V245H164V246H163V248H162V249H161V250H160V251H159V253H158V254H157V255H156V232H155V232H154V234H153V232H152V233H151V233H150V233H149V232H148V233H147V232H146V233H145V234H144V233H143V233H142V233H141V232H140V233H139V232H138V232H137V233H136V234H135V232H134V232H133V232H132V233H131V233H130V232H129V232H128V233H127V232H126V233H125V232H124V232H123V233H122V233H121V232H120V232H119V232H118V232H117V233H116V233H115V234H114V234H113V232H112V232H111V232H110V233H109V234H108V232H107V234H106V232H105V232H104V232H103V233H102V232H101V232H100V233H99V234H98V234H97V232H96V232H95V233H94V234H93V233H92V233H91V233H90V233H89V233H88V232H87V232H86V233H85V234H84V232H83V232H82V233H81V233H80V233H79V232H78V232H77V232H76V233H75V232H74V233H73V233H72V232H71V234H70Z" fill="#808000"/><rect x="960" y="122" width="3" height="62" fill="#ff0080"/><rect x="960" y="239" width="3" height="1" fill="#ffff00"/></g>
<g shape-rendering="crispEdges">
<rect x="70" y="509" width="1200" height="1" fill="#ff0080"/>
<rect x="77" y="420" width="1" height="90" fill="#ff0080"/>
<rect x="76" y="435" width="1" height="75" fill="#ff0080"/>
<rect x="78" y="510" width="2" height="2" fill="#ff0080"/>
<rect x="79" y="506" width="1" height="3" fill="#ff0080"/>
<rect x="94" y="404" width="1" height="106" fill="#ff0080"/>
<rect x="93" y="498" width="1" height="12" fill="#ff0080"/>
<rect x="95" y="510" width="2" height="1" fill="#ff0080"/>
<rect x="111" y="415" width="1" height="95" fill="#ff0080"/>
<rect x="112" y="477" width="1" height="33" fill="#ff0080"/>
<rect x="128" y="420" width="1" height="90" fill="#ff0080"/>
<rect x="129" y="425" width="1" height="85" fill="#ff0080"/>
<rect x="129" y="510" width="2" height="1" fill="#ff0080"/>
<rect x="130" y="506" width="1" height="3" fill="#ff0080"/>
<rect x="146" y="423" width="1" height="87" fill="#ff0080"/>
<rect x="145" y="438" width="1" height="72" fill="#ff0080"/>
<rect x="147" y="510" width="1" height="2" fill="#ff0080"/>
<rect x="163" y="420" width="1" height="90" fill="#ff0080"/>
<rect x="162" y="496" width="1" height="14" fill="#ff0080"/>
<rect x="180" y="418" width="1" height="92" fill="#ff0080"/>
<rect x="181" y="505" width="1" height="5" fill="#ff0080"/>
<rect x="181" y="510" width="2" height="1" fill="#ff0080"/>
<rect x="197" y="417" width="1" height="93" fill="#ff0080"/>
<rect x="198" y="451" width="1" height="59" fill="#ff0080"/>
<rect x="198" y="510" width="1" height="2" fill="#ff0080"/>
<rect x="214" y="414" width="1" height="96" fill="#ff0080"/>
<rect x="213" y="416" width="1" height="94" fill="#ff0080"/>
<rect x="215" y="510" width="1" height="2" fill="#ff0080"/>
<rect x="232" y="415" width="1" height="95" fill="#ff0080"/>
<rect x="233" y="448" width="1" height="62" fill="#ff0080"/>
<rect x="234" y="506" width="1" height="3" fill="#ff0080"/>
<rect x="249" y="422" width="1" height="88" fill="#ff0080"/>
<rect x="250" y="491" width="1" height="19" fill="#ff0080"/>
<rect x="250" y="510" width="2" height="2" fill="#ff0080"/>
<rect x="266" y="404" width="1" height="106" fill="#ff0080"/>
<rect x="267" y="451" width="1" height="59" fill="#ff0080"/>
<rect x="267" y="510" width="1" height="1" fill="#ff0080"/>
<rect x="283" y="414" width="1" height="96" fill="#ff0080"/>
<rect x="282" y="475" width="1" height="35" fill="#ff0080"/>
<rect x="300" y="413" width="1" height="97" fill="#ff0080"/>
<rect x="299" y="447" width="1" height="63" fill="#ff0080"/>
<rect x="301" y="510" width="2" height="1" fill="#ff0080"/>
<rect x="317" y="403" width="1" height="107" fill="#ff0080"/>
<rect x="316" y="483" width="1" height="27" fill="#ff0080"/>
<rect x="318" y="510" width="2" height="1" fill="#ff0080"/>
<rect x="334" y="408" width="1" height="102" fill="#ff0080"/>
<rect x="333" y="470" width="1" height="40" fill="#ff0080"/>
<rect x="335" y="510" width="2" height="2" fill="#ff0080"/>
<rect x="336" y="506" width="1" height="3" fill="#ff0080"/>
<rect x="351" y="420" width="1" height="90" fill="#ff0080"/>
<rect x="350" y="435" width="1" height="75" fill="#ff0080"/>
<rect x="352" y="510" width="2" height="1" fill="#ff0080"/>
<rect x="353" y="506" width="1" height="3" fill="#ff0080"/>
<rect x="368" y="404" width="1" height="106" fill="#ff0080"/>
<rect x="369" y="421" width="1" height="89" fill="#ff0080"/>
<rect x="369" y="510" width="2" height="2" fill="#ff0080"/>
<rect x="385" y="420" width="1" height="90" fill="#ff0080"/>
<rect x="386" y="451" width="1" height="59" fill="#ff0080"/>
<rect x="386" y="510" width="1" height="1" fill="#ff0080"/>
<rect x="402" y="421" width="1" height="89" fill="#ff0080"/>
<rect x="401" y="477" width="1" height="33" fill="#ff0080"/>
<rect x="403" y="510" width="1" height="2" fill="#ff0080"/>
<rect x="404" y="506" width="1" height="3" fill="#ff0080"/>
<rect x="419" y="403" width="1" height="107" fill="#ff0080"/>
<rect x="418" y="418" width="1" height="92" fill="#ff0080"/>
<rect x="420" y="510" width="1" height="2" fill="#ff0080"/>
<rect x="436" y="408" width="1" height="102" fill="#ff0080"/>
<rect x="435" y="487" width="1" height="23" fill="#ff0080"/>
<rect x="437" y="510" width="2" height="1" fill="#ff0080"/>
<rect x="453" y="406" width="1" height="104" fill="#ff0080"/>
<rect x="454" y="447" width="1" height="63" fill="#ff0080"/>
<rect x="454" y="510" width="1" height="2" fill="#ff0080"/>
<rect x="455" y="506" width="1" height="3" fill="#ff0080"/>
<rect x="470" y="404" width="1" height="106" fill="#ff0080"/>
<rect x="471" y="412" width="1" height="98" fill="#ff0080"/>
<rect x="472" y="506" width="1" height="3" fill="#ff0080"/>
<rect x="487" y="416" width="1" height="94" fill="#ff0080"/>
<rect x="488" y="454" width="1" height="56" fill="#ff0080"/>
<rect x="488" y="510" width="1" height="1" fill="#ff0080"/>
<rect x="504" y="424" width="1" height="86" fill="#ff0080"/>
<rect x="503" y="457" width="1" height="53" fill="#ff0080"/>
<rect x="521" y="412" width="1" height="98" fill="#ff0080"/>
<rect x="522" y="447" width="1" height="63" fill="#ff0080"/>
<rect x="538" y="416" width="1" height="94" fill="#ff0080"/>
<rect x="537" y="489" width="1" height="21" fill="#ff0080"/>
<rect x="539" y="510" width="1" height="2" fill="#ff0080"/>
<rect x="554" y="404" width="1" height="106" fill="#ff0080"/>
<rect x="555" y="420" width="1" height="90" fill="#ff0080"/>
<rect x="555" y="510" width="2" height="1" fill="#ff0080"/>
<rect x="572" y="417" width="1" height="93" fill="#ff0080"/>
<rect x="573" y="494" width="1" height="16" fill="#ff0080"/>
<rect x="573" y="510" width="1" height="1" fill="#ff0080"/>
<rect x="574" y="506" width="1" height="3" fill="#ff0080"/>
<rect x="588" y="414" width="1" height="96" fill="#ff0080"/>
<rect x="589" y="474" width="1" height="36" fill="#ff0080"/>
<rect x="590" y="506" width="1" height="3" fill="#ff0080"/>
<rect x="605" y="419" width="1" height="91" fill="#ff0080"/>
<rect x="604" y="447" width="1" height="63" fill="#ff0080"/>
<rect x="606" y="510" width="1" height="1" fill="#ff0080"/>
<rect x="622" y="418" width="1" height="92" fill="#ff0080"/>
<rect x="623" y="441" width="1" height="69" fill="#ff0080"/>
<rect x="623" y="510" width="2" height="2" fill="#ff0080"/>
<rect x="639" y="410" width="1" height="100" fill="#ff0080"/>
<rect x="640" y="480" width="1" height="30" fill="#ff0080"/>
<rect x="656" y="403" width="1" height="107" fill="#ff0080"/>
<rect x="657" y="436" width="1" height="74" fill="#ff0080"/>
<rect x="657" y="510" width="1" height="1" fill="#ff0080"/>
<rect x="658" y="506" width="1" height="3" fill="#ff0080"/>
<rect x="672" y="422" width="1" height="88" fill="#ff0080"/>
<rect x="673" y="475" width="1" height="35" fill="#ff0080"/>
<rect x="689" y="405" width="1" height="105" fill="#ff0080"/>
<rect x="690" y="458" width="1" height="52" fill="#ff0080"/>
<rect x="690" y="510" width="2" height="1" fill="#ff0080"/>
<rect x="867" y="414" width="1" height="96" fill="#ff0080"/>
<rect x="866" y="440" width="1" height="70" fill="#ff0080"/>
<rect x="868" y="510" width="2" height="2" fill="#ff0080"/>
<rect x="876" y="399" width="1" height="111" fill="#ff0080"/>
<rect x="875" y="407" width="1" height="103" fill="#ff0080"/>
<rect x="878" y="506" width="1" height="3" fill="#ff0080"/>
<rect x="884" y="398" width="1" height="112" fill="#ff0080"/>
<rect x="885" y="483" width="1" height="27" fill="#ff0080"/>
<rect x="893" y="413" width="1" height="97" fill="#ff0080"/>
<rect x="892" y="426" width="1" height="84" fill="#ff0080"/>
<rect x="894" y="510" width="1" height="2" fill="#ff0080"/>
<rect x="901" y="402" width="1" height="108" fill="#ff0080"/>
<rect x="902" y="489" width="1" height="21" fill="#ff0080"/>
<rect x="903" y="506" width="1" height="3" fill="#ff0080"/>
<rect x="910" y="415" width="1" height="95" fill="#ff0080"/>
<rect x="909" y="464" width="1" height="46" fill="#ff0080"/>
<rect x="918" y="403" width="1" height="107" fill="#ff0080"/>
<rect x="919" y="447" width="1" height="63" fill="#ff0080"/>
<rect x="919" y="510" width="1" height="2" fill="#ff0080"/>
<rect x="927" y="397" width="1" height="113" fill="#ff0080"/>
<rect x="926" y="464" width="1" height="46" fill="#ff0080"/>
<rect x="928" y="510" width="2" height="2" fill="#ff0080"/>
<rect x="936" y="414" width="1" height="96" fill="#ff0080"/>
<rect x="937" y="421" width="1" height="89" fill="#ff0080"/>
<rect x="937" y="510" width="2" height="1" fill="#ff0080"/>
<rect x="938" y="506" width="1" height="3" fill="#ff0080"/>
<rect x="944" y="402" width="1" height="108" fill="#ff0080"/>
<rect x="943" y="496" width="1" height="14" fill="#ff0080"/>
<rect x="945" y="510" width="2" height="2" fill="#ff0080"/>
<rect x="953" y="397" width="1" height="113" fill="#ff0080"/>
<rect x="952" y="404" width="1" height="106" fill="#ff0080"/>
<rect x="954" y="510" width="1" height="1" fill="#ff0080"/>
<rect x="955" y="506" width="1" height="3" fill="#ff0080"/>
<rect x="961" y="411" width="1" height="99" fill="#ff0080"/>
<rect x="960" y="502" width="1" height="8" fill="#ff0080"/>
<rect x="962" y="510" width="1" height="1" fill="#ff0080"/>
<rect x="970" y="398" width="1" height="112" fill="#ff0080"/>
<rect x="969" y="431" width="1" height="79" fill="#ff0080"/>
<rect x="978" y="415" width="1" height="95" fill="#ff0080"/>
<rect x="979" y="476" width="1" height="34" fill="#ff0080"/>
<rect x="979" y="510" width="1" height="1" fill="#ff0080"/>
<rect x="987" y="399" width="1" height="111" fill="#ff0080"/>
<rect x="986" y="434" width="1" height="76" fill="#ff0080"/>
<rect x="988" y="510" width="1" height="1" fill="#ff0080"/>
<rect x="996" y="401" width="1" height="109" fill="#ff0080"/>
<rect x="997" y="414" width="1" height="96" fill="#ff0080"/>
<rect x="997" y="510" width="1" height="1" fill="#ff0080"/>
<rect x="998" y="506" width="1" height="3" fill="#ff0080"/>
<rect x="1004" y="412" width="1" height="98" fill="#ff0080"/>
<rect x="1003" y="488" width="1" height="22" fill="#ff0080"/>
<rect x="1005" y="510" width="1" height="1" fill="#ff0080"/>
<rect x="1006" y="506" width="1" height="3" fill="#ff0080"/>
<rect x="1200" y="406" width="1" height="104" fill="#ff0080"/>
<rect x="1199" y="459" width="1" height="51" fill="#ff0080"/>
<rect x="1201" y="510" width="2" height="2" fill="#ff0080"/>
<rect x="1202" y="506" width="1" height="3" fill="#ff0080"/>
<rect x="1209" y="403" width="1" height="107" fill="#ff0080"/>
<rect x="1210" y="443" width="1" height="67" fill="#ff0080"/>
<rect x="1210" y="510" width="1" height="1" fill="#ff0080"/>
<rect x="1211" y="506" width="1" height="3" fill="#ff0080"/>
<rect x="1218" y="402" width="1" height="108" fill="#ff0080"/>
<rect x="1219" y="429" width="1" height="81" fill="#ff0080"/>
<rect x="1226" y="416" width="1" height="94" fill="#ff0080"/>
<rect x="1225" y="481" width="1" height="29" fill="#ff0080"/>
<rect x="1235" y="402" width="1" height="108" fill="#ff0080"/>
<rect x="1236" y="411" width="1" height="99" fill="#ff0080"/>
<rect x="1236" y="510" width="1" height="2" fill="#ff0080"/>
<rect x="1244" y="399" width="1" height="111" fill="#ff0080"/>
<rect x="1243" y="472" width="1" height="38" fill="#ff0080"/>
<rect x="1252" y="413" width="1" height="97" fill="#ff0080"/>
<rect x="1251" y="492" width="1" height="18" fill="#ff0080"/>
<rect x="1253" y="510" width="2" height="1" fill="#ff0080"/>
<rect x="1261" y="397" width="1" height="113" fill="#ff0080"/>
<rect x="1260" y="405" width="1" height="105" fill="#ff0080"/>
<rect x="1263" y="506" width="1" height="3" fill="#ff0080"/>
<rect x="1269" y="418" width="1" height="92" fill="#ff0080"/>
</g>
<g shape-rendering="crispEdges" fill="#ffff00"><rect x="70" y="623" width="643" height="1"/><rect x="713" y="622" width="12" height="1"/><rect x="725" y="621" width="8" height="1"/><rect x="733" y="620" width="5" height="1"/><rect x="738" y="619" width="5" height="1"/><rect x="743" y="618" width="4" height="1"/><rect x="747" y="617" width="4" height="1"/><rect x="751" y="616" width="4" height="1"/><rect x="755" y="615" width="4" height="1"/><rect x="759" y="614" width="3" height="1"/><rect x="762" y="613" width="4" height="1"/><rect x="766" y="612" width="3" height="1"/><rect x="769" y="611" width="3" height="1"/><rect x="772" y="610" width="3" height="1"/><rect x="775" y="609" width="3" height="1"/><rect x="778" y="608" width="3" height="1"/><rect x="781" y="607" width="3" height="1"/><rect x="784" y="606" width="3" height="1"/><rect x="787" y="605" width="3" height="1"/><rect x="790" y="604" width="2" height="1"/><rect x="792" y="603" width="3" height="1"/><rect x="795" y="602" width="2" height="1"/><rect x="797" y="601" width="3" height="1"/><rect x="800" y="600" width="2" height="1"/><rect x="802" y="599" width="3" height="1"/><rect x="805" y="598" width="2" height="1"/><rect x="807" y="597" width="2" height="1"/><rect x="809" y="596" width="3" height="1"/><rect x="812" y="595" width="2" height="1"/><rect x="814" y="594" width="2" height="1"/><rect x="816" y="593" width="3" height="1"/><rect x="819" y="592" width="2" height="1"/><rect x="821" y="591" width="3" height="1"/><rect x="824" y="590" width="2" height="1"/><rect x="826" y="589" width="3" height="1"/><rect x="829" y="588" width="2" height="1"/><rect x="831" y="587" width="3" height="1"/><rect x="834" y="586" width="3" height="1"/><rect x="837" y="585" width="3" height="1"/><rect x="840" y="584" width="2" height="1"/><rect x="842" y="583" width="3" height="1"/><rect x="845" y="582" width="3" height="1"/><rect x="848" y="581" width="2" height="1"/><rect x="850" y="580" width="3" height="1"/><rect x="853" y="579" width="3" height="1"/><rect x="856" y="578" width="3" height="1"/><rect x="859" y="577" width="3" height="1"/><rect x="862" y="576" width="3" height="1"/><rect x="865" y="575" width="4" height="1"/><rect x="869" y="574" width="4" height="1"/><rect x="873" y="573" width="6" height="1"/><rect x="879" y="572" width="6" height="1"/><rect x="885" y="571" width="7" height="1"/><rect x="892" y="570" width="8" height="1"/><rect x="900" y="569" width="35" height="1"/><rect x="935" y="570" width="8" height="1"/><rect x="943" y="571" width="5" height="1"/><rect x="948" y="572" width="5" height="1"/><rect x="953" y="573" width="4" height="1"/><rect x="957" y="574" width="4" height="1"/><rect x="961" y="575" width="3" height="1"/><rect x="964" y="576" width="3" height="1"/><rect x="967" y="577" width="3" height="1"/><rect x="970" y="578" width="4" height="1"/><rect x="974" y="579" width="2" height="1"/><rect x="976" y="580" width="3" height="1"/><rect x="979" y="581" width="3" height="1"/><rect x="982" y="582" width="3" height="1"/><rect x="985" y="583" width="2" height="1"/><rect x="987" y="584" width="3" height="1"/><rect x="990" y="585" width="3" height="1"/><rect x="993" y="586" width="2" height="1"/><rect x="995" y="587" width="3" height="1"/><rect x="998" y="588" width="2" height="1"/><rect x="1000" y="589" width="3" height="1"/><rect x="1003" y="590" width="3" height="1"/><rect x="1006" y="591" width="2" height="1"/><rect x="1008" y="592" width="3" height="1"/><rect x="1011" y="593" width="2" height="1"/><rect x="1013" y="594" width="3" height="1"/><rect x="1016" y="595" width="2" height="1"/><rect x="1018" y="596" width="3" height="1"/><rect x="1021" y="597" width="3" height="1"/><rect x="1024" y="598" width="3" height="1"/><rect x="1027" y="599" width="3" height="1"/><rect x="1030" y="600" width="3" height="1"/><rect x="1033" y="601" width="3" height="1"/><rect x="1036" y="602" width="4" height="1"/><rect x="1040" y="603" width="4" height="1"/><rect x="1044" y="604" width="4" height="1"/><rect x="1048" y="605" width="4" height="1"/><rect x="1052" y="606" width="6" height="1"/><rect x="1058" y="607" width="6" height="1"/><rect x="1064" y="608" width="28" height="1"/><rect x="1092" y="607" width="9" height="1"/><rect x="1101" y="606" width="6" height="1"/><rect x="1107" y="605" width="5" height="1"/><rect x="1112" y="604" width="6" height="1"/><rect x="1118" y="603" width="4" height="1"/><rect x="1122" y="602" width="4" height="1"/><rect x="1126" y="601" width="4" height="1"/><rect x="1130" y="600" width="4" height="1"/><rect x="1134" y="599" width="4" height="1"/><rect x="1138" y="598" width="4" height="1"/><rect x="1142" y="597" width="4" height="1"/><rect x="1146" y="596" width="3" height="1"/><rect x="1149" y="595" width="4" height="1"/><rect x="1153" y="594" width="3" height="1"/><rect x="1156" y="593" width="4" height="1"/><rect x="1160" y="592" width="3" height="1"/><rect x="1163" y="591" width="4" height="1"/><rect x="1167" y="590" width="3" height="1"/><rect x="1170" y="589" width="3" height="1"/><rect x="1173" y="588" width="4" height="1"/><rect x="1177" y="587" width="3" height="1"/><rect x="1180" y="586" width="3" height="1"/><rect x="1183" y="585" width="4" height="1"/><rect x="1187" y="584" width="3" height="1"/><rect x="1190" y="583" width="3" height="1"/><rect x="1193" y="582" width="4" height="1"/><rect x="1197" y="581" width="3" height="1"/><rect x="1200" y="580" width="4" height="1"/><rect x="1204" y="579" width="4" height="1"/><rect x="1208" y="578" width="3" height="1"/><rect x="1211" y="577" width="4" height="1"/><rect x="1215" y="576" width="5" height="1"/><rect x="1220" y="575" width="4" height="1"/><rect x="1224" y="574" width="5" height="1"/><rect x="1229" y="573" width="7" height="1"/><rect x="1236" y="572" width="8" height="1"/><rect x="1244" y="571" width="19" height="1"/><rect x="1263" y="572" width="7" height="1"/></g>
<rect x="520" y="623" width="4" height="2" fill="#ffff00" shape-rendering="crispEdges"/>
<path d="M957.0 160 L961.0 160 L961.0 152 L964.0 152 L964.0 160 L968.0 160 L962.5 166 Z" fill="#000" stroke="#000" stroke-width="2.4"/><path d="M958.5 187 L962.5 187 L962.5 195 L965.5 195 L965.5 187 L969.5 187 L964 181 Z" fill="#000" stroke="#000" stroke-width="2.4"/><path d="M958.5 217.5 L962.5 217.5 L962.5 225.5 L965.5 225.5 L965.5 217.5 L969.5 217.5 L964 211.5 Z" fill="#000" stroke="#000" stroke-width="2.4"/><path d="M957.0 234 L961.0 234 L961.0 226 L964.0 226 L964.0 234 L968.0 234 L962.5 240 Z" fill="#000" stroke="#000" stroke-width="2.4"/><path d="M683.0 474 L687.0 474 L687.0 466 L690.0 466 L690.0 474 L694.0 474 L688.5 480 Z" fill="#000" stroke="#000" stroke-width="2.4"/><path d="M683.0 618 L687.0 618 L687.0 610 L690.0 610 L690.0 618 L694.0 618 L688.5 624 Z" fill="#000" stroke="#000" stroke-width="2.4"/><path d="M860.5 514 L864.5 514 L864.5 522 L867.5 522 L867.5 514 L871.5 514 L866 508 Z" fill="#000" stroke="#000" stroke-width="2.4"/><path d="M860.5 582 L864.5 582 L864.5 590 L867.5 590 L867.5 582 L871.5 582 L866 576 Z" fill="#000" stroke="#000" stroke-width="2.4"/>
<g shape-rendering="crispEdges" fill="#fff">
<rect x="962" y="38" width="1" height="9"/><rect x="962" y="53" width="1" height="3"/><rect x="962" y="62" width="1" height="9"/><rect x="962" y="77" width="1" height="3"/><rect x="962" y="86" width="1" height="9"/><rect x="962" y="101" width="1" height="3"/><rect x="962" y="110" width="1" height="9"/><rect x="962" y="125" width="1" height="3"/><rect x="962" y="134" width="1" height="9"/><rect x="962" y="149" width="1" height="3"/><rect x="962" y="158" width="1" height="9"/><rect x="962" y="173" width="1" height="3"/><rect x="962" y="182" width="1" height="9"/><rect x="962" y="197" width="1" height="3"/><rect x="962" y="206" width="1" height="9"/><rect x="962" y="221" width="1" height="3"/><rect x="962" y="230" width="1" height="9"/><rect x="962" y="245" width="1" height="3"/><rect x="962" y="254" width="1" height="9"/><rect x="962" y="269" width="1" height="3"/><rect x="962" y="278" width="1" height="9"/><rect x="962" y="293" width="1" height="3"/><rect x="962" y="302" width="1" height="9"/>
<rect x="963" y="38" width="2" height="18"/><rect x="963" y="62" width="2" height="18"/><rect x="963" y="86" width="2" height="18"/><rect x="963" y="110" width="2" height="18"/><rect x="963" y="134" width="2" height="18"/><rect x="963" y="158" width="2" height="18"/><rect x="963" y="182" width="2" height="18"/><rect x="963" y="206" width="2" height="18"/><rect x="963" y="230" width="2" height="18"/><rect x="963" y="254" width="2" height="18"/><rect x="963" y="278" width="2" height="18"/><rect x="963" y="302" width="2" height="15"/>
<rect x="688" y="363" width="1" height="9"/><rect x="688" y="378" width="1" height="3"/><rect x="688" y="387" width="1" height="9"/><rect x="688" y="402" width="1" height="3"/><rect x="688" y="411" width="1" height="9"/><rect x="688" y="426" width="1" height="3"/><rect x="688" y="435" width="1" height="9"/><rect x="688" y="450" width="1" height="3"/><rect x="688" y="459" width="1" height="9"/><rect x="688" y="474" width="1" height="3"/><rect x="688" y="483" width="1" height="9"/><rect x="688" y="498" width="1" height="3"/><rect x="688" y="507" width="1" height="9"/><rect x="688" y="522" width="1" height="3"/><rect x="688" y="531" width="1" height="9"/><rect x="688" y="546" width="1" height="3"/><rect x="688" y="555" width="1" height="9"/><rect x="688" y="570" width="1" height="3"/><rect x="688" y="579" width="1" height="9"/><rect x="688" y="594" width="1" height="3"/><rect x="688" y="603" width="1" height="9"/><rect x="688" y="618" width="1" height="3"/><rect x="688" y="627" width="1" height="9"/>
<rect x="865" y="363" width="2" height="18"/><rect x="865" y="387" width="2" height="18"/><rect x="865" y="411" width="2" height="18"/><rect x="865" y="435" width="2" height="18"/><rect x="865" y="459" width="2" height="18"/><rect x="865" y="483" width="2" height="18"/><rect x="865" y="507" width="2" height="18"/><rect x="865" y="531" width="2" height="18"/><rect x="865" y="555" width="2" height="18"/><rect x="865" y="579" width="2" height="18"/><rect x="865" y="603" width="2" height="18"/><rect x="865" y="627" width="2" height="15"/>
</g>
<path d="M957.0 160 L961.0 160 L961.0 152 L964.0 152 L964.0 160 L968.0 160 L962.5 166 Z" fill="#fff"/><path d="M958.5 187 L962.5 187 L962.5 195 L965.5 195 L965.5 187 L969.5 187 L964 181 Z" fill="#fff"/><path d="M958.5 217.5 L962.5 217.5 L962.5 225.5 L965.5 225.5 L965.5 217.5 L969.5 217.5 L964 211.5 Z" fill="#fff"/><path d="M957.0 234 L961.0 234 L961.0 226 L964.0 226 L964.0 234 L968.0 234 L962.5 240 Z" fill="#fff"/><path d="M683.0 474 L687.0 474 L687.0 466 L690.0 466 L690.0 474 L694.0 474 L688.5 480 Z" fill="#fff"/><path d="M683.0 618 L687.0 618 L687.0 610 L690.0 610 L690.0 618 L694.0 618 L688.5 624 Z" fill="#fff"/><path d="M860.5 514 L864.5 514 L864.5 522 L867.5 522 L867.5 514 L871.5 514 L866 508 Z" fill="#fff"/><path d="M860.5 582 L864.5 582 L864.5 590 L867.5 590 L867.5 582 L871.5 582 L866 576 Z" fill="#fff"/>
<g shape-rendering="crispEdges">
<path d="M636.5 330 L640 338 L633 338 Z" fill="#ffff00" shape-rendering="auto"/>
<path d="M1270 162.5 L1278 158.5 L1278 166.5 Z" fill="#ffff00" shape-rendering="auto"/>
<path d="M1270 214.5 L1278 210.5 L1278 218.5 Z" fill="#ffff00" shape-rendering="auto"/>
<rect x="54" y="171" width="16" height="11" rx="2" fill="#ff0080" shape-rendering="auto"/><rect x="60" y="183" width="10" height="2" fill="#ff0080"/>
<rect x="61" y="257" width="9" height="2" fill="#ffff00"/>
<rect x="55" y="496" width="15" height="11" rx="2" fill="#ff0080" shape-rendering="auto"/><rect x="60" y="508" width="10" height="2" fill="#ff0080"/>
<rect x="60" y="654" width="10" height="2" fill="#ffff00"/><rect x="60" y="656" width="1" height="1" fill="#ffff00"/>
<path d="M64.5 659.5 H71 M64.5 659.5 L67.5 656.5 M64.5 659.5 L67.5 662.5" stroke="#ff0080" stroke-width="1.2" fill="none" shape-rendering="auto"/>
</g>
</svg>
<div class="yl" style="top:40px">19.95 V</div>
<div class="yl" style="top:69px">14.95 V</div>
<div class="yl" style="top:105px">9.95 V</div>
<div class="yl" style="top:142px">4.95 V</div>
<div class="yl" style="top:178px">-50 mV</div>
<div class="yl" style="top:215px">-5.05 V</div>
<div class="yl" style="top:251px">-10.05 V</div>
<div class="yl" style="top:288px">-15.05 V</div>
<div class="yl" style="top:317px">-20.05 V</div>
<div class="yl" style="top:365px">11.6 V</div>
<div class="yl" style="top:394px">8.7 V</div>
<div class="yl" style="top:430px">5.8 V</div>
<div class="yl" style="top:467px">2.9 V</div>
<div class="yl" style="top:503px">0 mV</div>
<div class="yl" style="top:540px">-2.9 V</div>
<div class="yl" style="top:576px">-5.8 V</div>
<div class="yl" style="top:613px">-8.7 V</div>
<div class="yl" style="top:642px">-11.6 V</div>
<div class="xl" style="top:333px;left:70.0px">-236 ms</div>
<div class="xl xc" style="top:333px;left:131.0px">-186 ms</div>
<div class="xl xc" style="top:333px;left:251.0px">-136 ms</div>
<div class="xl xc" style="top:333px;left:371.0px">-86 ms</div>
<div class="xl xc" style="top:333px;left:491.0px">-36 ms</div>
<div class="xl xc" style="top:333px;left:611.0px">14 ms</div>
<div class="xl xc" style="top:333px;left:731.0px">64 ms</div>
<div class="xl xc" style="top:333px;left:851.0px">114 ms</div>
<div class="xl xc" style="top:333px;left:971.0px">164 ms</div>
<div class="xl xc" style="top:333px;left:1091.0px">214 ms</div>
<div class="xl" style="top:333px;right:9px">264 ms</div>
<div class="xl" style="top:658px;left:70.0px">134.986 ms</div>
<div class="xl xc" style="top:658px;left:131.0px"></div>
<div class="xl xc" style="top:658px;left:251.0px">135.326 ms</div>
<div class="xl xc" style="top:658px;left:371.0px"></div>
<div class="xl xc" style="top:658px;left:491.0px">135.666 ms</div>
<div class="xl xc" style="top:658px;left:611.0px"></div>
<div class="xl xc" style="top:658px;left:731.0px">136.006 ms</div>
<div class="xl xc" style="top:658px;left:851.0px"></div>
<div class="xl xc" style="top:658px;left:971.0px">136.347 ms</div>
<div class="xl xc" style="top:658px;left:1091.0px"></div>
<div class="xl" style="top:658px;right:9px">136.687 ms</div>
<div class="mk" style="left:55px;top:171px;color:#000">C2</div>
<div class="mk" style="left:57px;top:245px;color:#ffff00">C1</div>
<div class="mk" style="left:56px;top:496px;color:#000">Z2</div>
<div class="mk" style="left:56px;top:642px;color:#ffff00">Z1</div>
<div class="cl" style="left:955px;top:316px">C1</div><div class="cl" style="left:956px;top:316px">C2</div>
<div class="cl" style="left:681px;top:641px">Z1</div><div class="cl" style="left:682px;top:641px">Z2</div>
<div class="cl" style="left:858px;top:641px">Z1</div><div class="cl" style="left:859px;top:641px">Z2</div>
<div class="dbox" style="left:4px;background:#404040;"><div class="hd" style="background:#ffff00"></div><div class="nm">C1</div><div class="bdg" style="left:50px;width:11px;color:#ffff00">F</div><div class="bdg" style="left:62px;width:12px;color:#ffff00">B</div><div class="bdg" style="left:75px;width:19px;color:#ffff00">D1</div><div class="row" style="top:18px">2.00 V/div</div><div class="row" style="top:33px">-4.05000 V</div><div class="symw" style="top:48px"><svg class="ar" width="7" height="13" viewBox="0 0 7 13"><path d="M3.5 0.500 V12 M1.300 9.200 L3.500 12 L5.700 9.200" fill="none" stroke="#f4f4e0" stroke-width="1.100"/></svg></div><div class="row" style="top:48px">988.25 mV</div><div class="symw" style="top:63px"><svg class="ar" width="7" height="13" viewBox="0 0 7 13"><path d="M3.5 12.500 V1 M1.300 3.800 L3.500 1 L5.700 3.800" fill="none" stroke="#f4f4e0" stroke-width="1.100"/></svg></div><div class="row" style="top:63px">2.47300 V</div><div class="sym" style="top:78px">Δy</div><div class="row" style="top:78px">1.48475 V</div></div>
<div class="dbox" style="left:104px;background:#404040;"><div class="hd" style="background:#ff0080"></div><div class="nm">C2</div><div class="bdg" style="left:50px;width:11px;color:#ff0080">F</div><div class="bdg" style="left:62px;width:12px;color:#ff0080">B</div><div class="bdg" style="left:75px;width:19px;color:#ff0080">D1</div><div class="row" style="top:18px">5.00 V/div</div><div class="row" style="top:33px">50.0 mV</div><div class="symw" style="top:48px"><svg class="ar" width="7" height="13" viewBox="0 0 7 13"><path d="M3.5 0.500 V12 M1.300 9.200 L3.500 12 L5.700 9.200" fill="none" stroke="#f4f4e0" stroke-width="1.100"/></svg></div><div class="row" style="top:48px">2.2956 V</div><div class="symw" style="top:63px"><svg class="ar" width="7" height="13" viewBox="0 0 7 13"><path d="M3.5 12.500 V1 M1.300 3.800 L3.500 1 L5.700 3.800" fill="none" stroke="#f4f4e0" stroke-width="1.100"/></svg></div><div class="row" style="top:63px">-41.9 mV</div><div class="sym" style="top:78px">Δy</div><div class="row" style="top:78px">-2.3375 V</div></div>
<div class="dbox" style="left:204px;background:#404040;"><div class="hd" style="background:#ffff00"></div><div class="nm">Z1</div><div class="zs">zoom(C1)</div><div class="row" style="top:18px">1.16 V/div</div><div class="row" style="top:33px">170 µs/div</div><div class="symw" style="top:48px"><svg class="ar" width="7" height="13" viewBox="0 0 7 13"><path d="M3.5 0.500 V12 M1.300 9.200 L3.500 12 L5.700 9.200" fill="none" stroke="#f4f4e0" stroke-width="1.100"/></svg></div><div class="row" style="top:48px">988.25 mV</div><div class="symw" style="top:63px"><svg class="ar" width="7" height="13" viewBox="0 0 7 13"><path d="M3.5 12.500 V1 M1.300 3.800 L3.500 1 L5.700 3.800" fill="none" stroke="#f4f4e0" stroke-width="1.100"/></svg></div><div class="row" style="top:63px">2.47300 V</div><div class="sym" style="top:78px">Δy</div><div class="row" style="top:78px">1.48475 V</div><div class="ul"></div></div>
<div class="dbox" style="left:304px;background:#2b4d6b;box-shadow:0 0 0 1px #1e8fe8 inset;"><div class="hd" style="background:#ff0080"></div><div class="nm">Z2</div><div class="zs">zoom(C2)</div><div class="row" style="top:18px">2.90 V/div</div><div class="row" style="top:33px">170 µs/div</div><div class="symw" style="top:48px"><svg class="ar" width="7" height="13" viewBox="0 0 7 13"><path d="M3.5 0.500 V12 M1.300 9.200 L3.500 12 L5.700 9.200" fill="none" stroke="#f4f4e0" stroke-width="1.100"/></svg></div><div class="row" style="top:48px">2.2956 V</div><div class="symw" style="top:63px"><svg class="ar" width="7" height="13" viewBox="0 0 7 13"><path d="M3.5 12.500 V1 M1.300 3.800 L3.500 1 L5.700 3.800" fill="none" stroke="#f4f4e0" stroke-width="1.100"/></svg></div><div class="row" style="top:63px">-41.9 mV</div><div class="sym" style="top:78px">Δy</div><div class="row" style="top:78px">-2.3375 V</div><div class="ul"></div><div style="position:absolute;left:0;top:0;width:95px;height:92px;border:1px solid #1e8fe8"></div></div>
<div id="plus"></div>
<div class="rbox" style="left:1003px;width:57px"><div class="hd" style="background:#00ff00;text-align:center;font-weight:bold;line-height:17px">HD</div><span class="oc" style="left:0;width:57px;text-align:center;top:24px">12 Bits</span></div>
<div class="rbox" style="left:1063px;width:112px"><div class="hd"></div><span class="ol" style="left:3px;top:1px;color:#000">Tbase</span><span class="or" style="right:3px;top:1px;color:#000">-14 ms</span><span class="or" style="right:2px;top:18px">50.0 ms/div</span><span class="ol" style="left:3px;top:33px">2.5 MS</span><span class="or" style="right:2px;top:33px">5 MS/s</span></div>
<div class="rbox" style="left:1178px;width:97px"><div class="hd"></div><span class="ol" style="left:3px;top:1px;color:#000">Trigger</span><div class="bdg" style="left:51px;width:19px;top:1px;height:13px;color:#fff;line-height:8px;overflow:hidden">C1</div><div class="bdg" style="left:73px;width:21px;top:1px;height:13px;color:#fff;line-height:8px;overflow:hidden">DC</div><span class="ol" style="left:3px;top:18px">Stop</span><span class="or" style="right:2px;top:18px">2.42 V</span><span class="ol" style="left:3px;top:33px">SlewRate</span><span class="or" style="right:2px;top:33px">Pos</span></div>
<div class="ct" style="left:1009px;top:737px">X1=</div><div class="ct" style="left:1042px;top:737px">135.8632 ms</div><div class="ct" style="left:1135px;top:737px">ΔX=</div><div class="ct" style="left:1177px;top:737px">250.6 µs</div>
<div class="ct" style="left:1009px;top:753px">X2=</div><div class="ct" style="left:1042px;top:753px">136.1138 ms</div><div class="ct" style="left:1124px;top:753px">1/ΔX=</div><div class="ct" style="left:1169px;top:753px">3.990 kHz</div>
<div id="status"><div id="logo"><b>TELEDYNE</b><span>LECROY</span></div><div id="date">11/13/2023 6:06:53 AM</div><div id="dsep"></div></div>
</body></html>
